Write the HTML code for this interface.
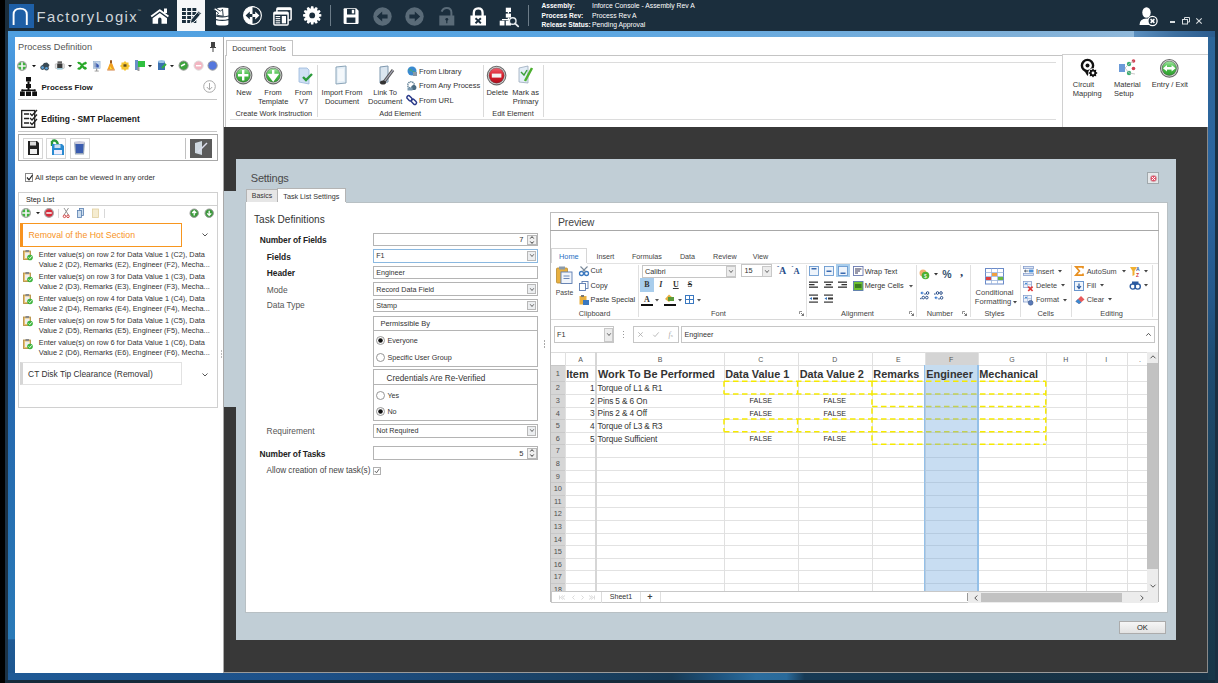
<!DOCTYPE html>
<html><head><meta charset="utf-8"><title>FactoryLogix</title>
<style>
html,body{margin:0;padding:0;}
body{width:1218px;height:683px;overflow:hidden;position:relative;background:#1b2e3d;font-family:"Liberation Sans", sans-serif;}
.a{position:absolute;box-sizing:border-box;}
.t{position:absolute;white-space:nowrap;line-height:1;font-family:"Liberation Sans", sans-serif;}
svg.a{overflow:visible;}
</style></head><body>
<div class="a" style="left:0px;top:0px;width:5px;height:683px;background:#000"></div>
<div class="a" style="left:5px;top:0px;width:1213px;height:31px;background:#1b2e3d"></div>
<div class="a" style="left:8px;top:31px;width:1126px;height:6px;background:linear-gradient(90deg,#4f9fe0 0%,#5aa6e2 50%,#7fb0d8 90%,#8fb8da 100%)"></div>
<div class="a" style="left:1134px;top:31px;width:81px;height:6px;background:linear-gradient(90deg,#5b8fbf 0%,#3d6f9f 50%,#2b5c8e 100%)"></div>
<div class="a" style="left:5px;top:31px;width:3px;height:652px;background:#1c3347"></div>
<div class="a" style="left:8px;top:37px;width:7px;height:636px;background:linear-gradient(180deg,#4c9de2 0%,#3a84cc 15%,#2d6cb5 30%,#2563ad 45%,#2670b2 75%,#2a7ab8 94.6%,#1f5a94 94.8%,#1d5690 100%)"></div>
<div class="a" style="left:8px;top:673px;width:1207px;height:7px;background:linear-gradient(90deg,#1f5a96 0%,#1d5088 25%,#1a4266 45%,#173a55 55%,#1f5580 59%,#2b6d9e 62%,#2a6a9a 64.5%,#173a55 66%,#173447 80%,#183246 100%)"></div>
<div class="a" style="left:5px;top:680px;width:1213px;height:3px;background:#152a3a"></div>
<div class="a" style="left:1208px;top:37px;width:7px;height:643px;background:linear-gradient(180deg,#2d6699 0%,#2a64a0 25%,#24588a 40%,#1e4c72 50%,#1c4460 65%,#1a3c52 80%,#193648 100%)"></div>
<div class="a" style="left:1215px;top:31px;width:3px;height:652px;background:#1a3043"></div>
<div class="a" style="left:9px;top:4px;width:25px;height:24px;background:#1e5fa6"></div>
<svg class="a" style="left:9px;top:4px;" width="25" height="24" viewBox="0 0 25 24"><path d="M4.6 21 V10.5 C4.6 6.2 7.2 4.6 11.2 4.6 C15.2 4.6 17.8 6.2 17.8 10.5 V21" fill="none" stroke="#fff" stroke-width="1.9"/></svg>
<div class="t" style="left:36.50px;top:9.67px;font-size:14.8px;color:#cfd5da;font-weight:400;letter-spacing:1.4px;">FactoryLogix</div>
<div class="t" style="left:137.00px;top:8.61px;font-size:4px;color:#9aa;font-weight:400;">&#8482;</div>
<svg class="a" style="left:150px;top:8px;" width="20" height="17" viewBox="0 0 20 17"><path d="M1.2 8.6 L9.8 2.2 L18.4 8.6" fill="none" stroke="#fff" stroke-width="1.9" stroke-linejoin="round"/><rect x="14" y="0.5" width="3" height="4.5" fill="#fff"/><path d="M2.6 10.2 L9.8 4.9 L17 10.2 V15.7 H11.5 V11.6 Q11.5 9.6 9.8 9.6 Q8.1 9.6 8.1 11.6 V15.7 H2.6Z" fill="#fff"/></svg>
<div class="a" style="left:177px;top:0px;width:28px;height:31px;background:#f6f7f9"></div>
<svg class="a" style="left:181.5px;top:8px;" width="19" height="16" viewBox="0 0 19 16"><g fill="#1b2e3d"><rect x="0.0" y="0.0" width="3.9" height="3.0"/><rect x="5.2" y="0.0" width="3.9" height="3.0"/><rect x="10.4" y="0.0" width="3.9" height="3.0"/><rect x="0.0" y="4.0" width="3.9" height="3.0"/><rect x="5.2" y="4.0" width="3.9" height="3.0"/><rect x="10.4" y="4.0" width="3.9" height="3.0"/><rect x="0.0" y="8.0" width="3.9" height="3.0"/><rect x="5.2" y="8.0" width="3.9" height="3.0"/><rect x="10.4" y="8.0" width="3.9" height="3.0"/><rect x="0.0" y="12.0" width="3.9" height="3.0"/><rect x="5.2" y="12.0" width="3.9" height="3.0"/><rect x="10.4" y="12.0" width="3.9" height="3.0"/></g><path d="M8.2 15.6 L9.2 11.4 L16.4 3 L19.4 5.6 L12.2 14 Z" fill="#1b2e3d" stroke="#f6f7f9" stroke-width="1"/><path d="M15.4 4.2 L18.4 6.8" stroke="#f6f7f9" stroke-width=".7"/></svg>
<svg class="a" style="left:212.5px;top:6.5px;" width="16" height="19" viewBox="0 0 16 19"><path d="M3 13.2 Q9.2 14.8 15.4 13.2 V17 Q15.4 18.6 9.2 18.6 Q3 18.6 3 17Z" fill="#fff"/><path d="M3 9.6 Q9.2 11.4 15.4 9.6 V11.9 Q9.2 13.6 3 11.9Z" fill="#fff"/><path d="M4.5 1 Q9.2 -0.2 15.4 1 V8.4 Q9.2 10.2 3 8.4 V5Z" fill="#fff"/><path d="M0.6 2.2 L2 0.8 L7.5 4.2 L9.5 2.2 L10.2 9.2 L3.6 8.2 L5.6 6.2Z" fill="#fff" stroke="#1b2e3d" stroke-width=".9"/></svg>
<svg class="a" style="left:242.5px;top:6.3px;" width="19" height="19" viewBox="0 0 19 19"><circle cx="9.5" cy="9.5" r="8.9" fill="#1b2e3d" stroke="#fff" stroke-width="1.1"/><path d="M9.5 0.6 A8.9 8.9 0 0 0 9.5 18.4Z" fill="#fff"/><path d="M2.6 9.5 L6.8 5.6 V8.1 H9.5 V10.9 H6.8 V13.4Z" fill="#1b2e3d"/><path d="M16.4 9.5 L12.2 5.6 V8.1 H9.5 V10.9 H12.2 V13.4Z" fill="#fff"/></svg>
<svg class="a" style="left:273px;top:6.5px;" width="19" height="19" viewBox="0 0 19 19"><rect x="3.9" y="0.9" width="14.2" height="12.2" rx="1" fill="none" stroke="#fff" stroke-width="1.5"/><rect x="3.9" y="0.9" width="14.2" height="2.2" fill="#fff"/><rect x="0.9" y="5.2" width="14.2" height="12.9" rx="1" fill="#1b2e3d" stroke="#fff" stroke-width="1.5"/><rect x="0.9" y="5.2" width="14.2" height="2.4" fill="#fff"/><g fill="#fff"><rect x="2.6" y="9" width="4.6" height="1.1"/><rect x="2.6" y="11.1" width="4.6" height="1.1"/><rect x="2.6" y="13.2" width="4.6" height="1.1"/><rect x="2.6" y="15.3" width="4.6" height="1.1"/><rect x="8.8" y="9" width="4.2" height="7.4"/></g></svg>
<svg class="a" style="left:303.4px;top:6.4px;" width="19" height="19" viewBox="0 0 19 19"><polygon points="15.58,7.70 18.33,8.30 18.33,10.50 15.58,11.10 15.57,11.12 17.66,13.01 16.56,14.92 13.88,14.06 13.86,14.08 14.72,16.76 12.81,17.86 10.92,15.77 10.90,15.78 10.30,18.53 8.10,18.53 7.50,15.78 7.48,15.77 5.59,17.86 3.68,16.76 4.54,14.08 4.52,14.06 1.84,14.92 0.74,13.01 2.83,11.12 2.82,11.10 0.07,10.50 0.07,8.30 2.82,7.70 2.83,7.68 0.74,5.79 1.84,3.88 4.52,4.74 4.54,4.72 3.68,2.04 5.59,0.94 7.48,3.03 7.50,3.02 8.10,0.27 10.30,0.27 10.90,3.02 10.92,3.03 12.81,0.94 14.72,2.04 13.86,4.72 13.88,4.74 16.56,3.88 17.66,5.79 15.57,7.68" fill="#fff"/><circle cx="9.2" cy="9.4" r="6.9" fill="#fff"/><circle cx="9.2" cy="9.4" r="2.9" fill="#1b2e3d"/></svg>
<div class="a" style="left:330px;top:5px;width:1px;height:21px;background:#6c7c88"></div>
<svg class="a" style="left:343.3px;top:7.8px;" width="16" height="16.2" viewBox="0 0 16 16.2"><path d="M0.6 1.2 Q0.6 0.3 1.5 0.3 H13.2 L15.6 2.7 V15.1 Q15.6 15.9 14.8 15.9 H1.5 Q0.6 15.9 0.6 15.1Z" fill="#fff"/><rect x="4" y="1" width="8.3" height="5.5" fill="#1b2e3d"/><rect x="8.8" y="1.8" width="2.4" height="3.6" fill="#fff"/><rect x="3.6" y="9.5" width="8.8" height="5.4" fill="#1b2e3d"/></svg>
<svg class="a" style="left:373.3px;top:6.6px;" width="19" height="19" viewBox="0 0 19 19"><circle cx="9.5" cy="9.5" r="9.2" fill="#5a6b78"/><path d="M3.8 9.5 L9.2 4.6 V7.6 H14.6 V11.4 H9.2 V14.4Z" fill="#1b2e3d"/></svg>
<svg class="a" style="left:405px;top:6.6px;" width="19" height="19" viewBox="0 0 19 19"><circle cx="9.5" cy="9.5" r="9.2" fill="#5a6b78"/><path d="M15.2 9.5 L9.8 4.6 V7.6 H4.4 V11.4 H9.8 V14.4Z" fill="#1b2e3d"/></svg>
<svg class="a" style="left:438.5px;top:6.5px;" width="16" height="19" viewBox="0 0 16 19"><path d="M2.6 4.6 Q4 0.9 7.8 0.9 Q12.4 0.9 12.4 5.5 V9" fill="none" stroke="#5a6b78" stroke-width="2"/><rect x="0.3" y="8.5" width="15" height="10" fill="#5a6b78"/><circle cx="7.8" cy="12.3" r="1.4" fill="#1b2e3d"/><rect x="7.2" y="12.5" width="1.2" height="3.8" fill="#1b2e3d"/></svg>
<svg class="a" style="left:469.5px;top:6.5px;" width="16.5" height="19" viewBox="0 0 16.5 19"><path d="M3.8 9 V6 Q3.8 1.4 8.2 1.4 Q12.6 1.4 12.6 6 V9" fill="none" stroke="#fff" stroke-width="2.3"/><rect x="0.4" y="8.5" width="15.6" height="10" fill="#fff"/><path d="M5.5 11.2 L10.9 16.2 M10.9 11.2 L5.5 16.2" stroke="#1b2e3d" stroke-width="1.9"/></svg>
<svg class="a" style="left:499px;top:6.5px;" width="20" height="20" viewBox="0 0 20 20"><g fill="#fff"><rect x="6.8" y="0.7" width="5.2" height="4.3"/><rect x="8.8" y="5" width="1.2" height="1.6"/><rect x="6.8" y="6.6" width="5.2" height="4"/><rect x="0.7" y="13.7" width="4.8" height="4.8"/><rect x="6.8" y="13.7" width="5.2" height="4.8"/><rect x="3" y="12" width="6" height="1.2"/><rect x="8.8" y="10.6" width="1.2" height="3"/></g><circle cx="13.7" cy="14" r="3.3" fill="#1b2e3d" stroke="#e8ecef" stroke-width="1.4"/><path d="M16 16.4 L19.2 19.4" stroke="#e8ecef" stroke-width="1.8" stroke-linecap="round"/></svg>
<div class="a" style="left:528px;top:5px;width:1px;height:21px;background:#6c7c88"></div>
<div class="t" style="left:541.50px;top:2.81px;font-size:6.6px;color:#ffffff;font-weight:700;">Assembly:</div>
<div class="t" style="left:592.00px;top:2.64px;font-size:6.8px;color:#ffffff;font-weight:400;">Inforce Console - Assembly Rev A</div>
<div class="t" style="left:541.50px;top:12.71px;font-size:6.6px;color:#ffffff;font-weight:700;">Process Rev:</div>
<div class="t" style="left:592.00px;top:12.54px;font-size:6.8px;color:#ffffff;font-weight:400;">Process Rev A</div>
<div class="t" style="left:541.50px;top:21.71px;font-size:6.6px;color:#ffffff;font-weight:700;">Release Status:</div>
<div class="t" style="left:592.00px;top:21.54px;font-size:6.8px;color:#ffffff;font-weight:400;">Pending Approval</div>
<svg class="a" style="left:1139px;top:7px;" width="19" height="19" viewBox="0 0 19 19"><ellipse cx="7.5" cy="5.5" rx="4.2" ry="5.3" fill="#fff"/><path d="M0.5 18 Q0.5 11.5 7.5 11.5 Q11 11.5 12 13 L10 18Z" fill="#fff"/><circle cx="13.5" cy="14" r="4.6" fill="#1b2e3d" stroke="#fff" stroke-width="1.3"/><path d="M11.6 12.1 L15.4 15.9 M15.4 12.1 L11.6 15.9" stroke="#fff" stroke-width="1.6"/></svg>
<div class="a" style="left:1170px;top:21px;width:5px;height:2px;background:#d8dde0"></div>
<svg class="a" style="left:1182px;top:17px;" width="8" height="8" viewBox="0 0 8 8"><rect x="0.5" y="2.5" width="5" height="4.5" fill="none" stroke="#d8dde0" stroke-width="1"/><path d="M2.5 2.5 V0.5 H7.5 V5 H5.5" fill="none" stroke="#d8dde0" stroke-width="1"/></svg>
<svg class="a" style="left:1196px;top:18px;" width="6" height="6" viewBox="0 0 6 6"><path d="M0.3 0.3 L5.7 5.7 M5.7 0.3 L0.3 5.7" stroke="#d8dde0" stroke-width="1.1"/></svg>
<div class="a" style="left:15px;top:37px;width:208px;height:636px;background:#fff"></div>
<div class="a" style="left:223px;top:37px;width:1px;height:636px;background:#a9a9a9"></div>
<div class="t" style="left:18.00px;top:43.21px;font-size:9.2px;color:#555;font-weight:400;">Process Definition</div>
<svg class="a" style="left:210px;top:42px;" width="6" height="10" viewBox="0 0 6 10"><rect x="1" y="0" width="4" height="5" fill="#444"/><rect x="0" y="5" width="6" height="1" fill="#444"/><rect x="2.5" y="6" width="1" height="4" fill="#444"/></svg>
<svg class="a" style="left:17.3px;top:60.7px;" width="10" height="10" viewBox="0 0 10 10"><circle cx="5" cy="5" r="4.4" fill="#3cb43c" stroke="#a8a8a8" stroke-width="1.2"/><path d="M5 1.2 V8.8 M1.2 5 H8.8" stroke="#f4f4f4" stroke-width="1.7"/></svg>
<svg class="a" style="left:31.5px;top:65px;" width="4" height="2.2" viewBox="0 0 4 2.2"><path d="M0 0 H4 L2 2.2Z" fill="#111"/></svg>
<svg class="a" style="left:40px;top:61.5px;" width="10" height="8.5" viewBox="0 0 10 8.5"><path d="M1 5 L4 1 L7 0.5 L9.5 3 L8 6 Z" fill="#3a4a55"/><circle cx="2.6" cy="5.6" r="2.3" fill="#3a4a55"/><circle cx="2.6" cy="5.6" r="1.3" fill="#5aa0d8"/><circle cx="6.5" cy="6.3" r="2.3" fill="#3a4a55"/><circle cx="6.5" cy="6.3" r="1.3" fill="#5aa0d8"/></svg>
<svg class="a" style="left:55px;top:61px;" width="9.5" height="9" viewBox="0 0 9.5 9"><rect x="2.5" y="0.3" width="4.5" height="3" fill="#666"/><rect x="0.3" y="2.8" width="9" height="4.6" rx=".6" fill="#e8e8e8" stroke="#999" stroke-width=".5"/><rect x="2.2" y="2.8" width="5.2" height="4.4" fill="#3a3a3a"/><rect x="2" y="7" width="5.6" height="1.6" fill="#9cc8d8"/></svg>
<svg class="a" style="left:68px;top:65px;" width="4" height="2.2" viewBox="0 0 4 2.2"><path d="M0 0 H4 L2 2.2Z" fill="#222"/></svg>
<svg class="a" style="left:77px;top:61px;" width="10" height="9.5" viewBox="0 0 10 9.5"><path d="M0.8 2.2 C2.5 1 3.5 2.5 5 4.6 C6.5 6.8 7.5 8 9.4 7 M0.8 7.2 C2.5 8.5 3.5 7 5 4.6 C6.5 2.5 7.5 1.4 9.4 2.4" fill="none" stroke="#28a828" stroke-width="2.3"/><path d="M8 0.3 L9.8 2.4 L7.6 3.8Z M8 5.6 L9.8 7 L7.6 9.2Z" fill="#28a828"/></svg>
<svg class="a" style="left:93px;top:60.5px;" width="7.5" height="10.5" viewBox="0 0 7.5 10.5"><rect x="0.3" y="0.3" width="6.8" height="7.2" fill="#c4d8ee" stroke="#8aa8c8" stroke-width=".5"/><rect x="1.5" y="1.5" width="1.2" height="5" fill="#7a8ab0"/><path d="M3.2 6.5 L3.2 2 L5.8 4 L5.8 6.5Z" fill="#3a5ab0"/><rect x="3.2" y="7.5" width="1" height="2.6" fill="#888"/><rect x="1.6" y="9.6" width="4.2" height=".9" fill="#999"/></svg>
<svg class="a" style="left:107px;top:60.2px;" width="8" height="10.6" viewBox="0 0 8 10.6"><rect x="3" y="0" width="2" height="4" rx="1" fill="#9a5a20"/><path d="M2.8 3.5 H5.2 C6 5 6.5 7.5 7.8 9.6 H0.2 C1.5 7.5 2 5 2.8 3.5Z" fill="#f2a020"/><path d="M3 6 C3.6 7 4.5 8.5 5.8 9.6 H3.5 C3 8.5 2.6 7 3 6Z" fill="#ffe040"/><path d="M0.2 9.6 H7.8 V10.4 H0.2Z" fill="#c86010"/></svg>
<svg class="a" style="left:120px;top:60.7px;" width="10" height="10" viewBox="0 0 10 10"><polygon points="10.00,5.00 8.51,6.45 8.54,8.54 6.45,8.51 5.00,10.00 3.55,8.51 1.46,8.54 1.49,6.45 0.00,5.00 1.49,3.55 1.46,1.46 3.55,1.49 5.00,0.00 6.45,1.49 8.54,1.46 8.51,3.55" fill="#f4c430"/><rect x="3.5" y="3.3" width="3" height="2.4" fill="#5a4a20"/></svg>
<svg class="a" style="left:134.5px;top:60px;" width="10" height="11" viewBox="0 0 10 11"><rect x="0" y="0" width="3" height="10" fill="#6a8fc8"/><path d="M3 1 H10 V7 H3Z" fill="#30c040"/><rect x="2.5" y="7" width="2" height="4" fill="#999"/></svg>
<svg class="a" style="left:148.4px;top:65px;" width="4" height="2.2" viewBox="0 0 4 2.2"><path d="M0 0 H4 L2 2.2Z" fill="#222"/></svg>
<svg class="a" style="left:158px;top:60px;" width="8.5" height="11" viewBox="0 0 8.5 11"><rect x="0" y="1" width="7" height="9" fill="#3a70b0"/><ellipse cx="3.5" cy="1.5" rx="3.5" ry="1.5" fill="#9cc4e8"/><path d="M4 8 L8 4" stroke="#30b040" stroke-width="2"/></svg>
<svg class="a" style="left:170.3px;top:65px;" width="4" height="2.2" viewBox="0 0 4 2.2"><path d="M0 0 H4 L2 2.2Z" fill="#222"/></svg>
<svg class="a" style="left:178.20000000000002px;top:60.1px;" width="11.2" height="11.2" viewBox="0 0 11.2 11.2"><circle cx="5.6" cy="5.6" r="4.6" fill="#3da23d" stroke="#9a9a9a" stroke-width="1"/><path d="M3 6 L7 4" stroke="#fff" stroke-width="1.5"/></svg>
<svg class="a" style="left:192.5px;top:60.1px;" width="11.2" height="11.2" viewBox="0 0 11.2 11.2"><circle cx="5.6" cy="5.6" r="4.6" fill="#f2b6c2" stroke="#dcdcdc" stroke-width="1"/><rect x="3" y="5" width="5.2" height="1.4" fill="#fff"/></svg>
<svg class="a" style="left:207.4px;top:60.1px;" width="11.2" height="11.2" viewBox="0 0 11.2 11.2"><circle cx="5.6" cy="5.6" r="4.6" fill="#5577dd" stroke="#9a9a9a" stroke-width="1"/></svg>
<svg class="a" style="left:20px;top:77px;" width="17" height="19" viewBox="0 0 17 19"><g fill="#111"><rect x="6" y="0" width="5" height="4.5"/><rect x="7.5" y="4.5" width="2" height="2.5"/><rect x="6" y="7" width="5" height="4"/><rect x="7.5" y="11" width="2" height="2"/><rect x="1.5" y="12.5" width="14" height="1.6"/><rect x="1.5" y="12.5" width="1.6" height="2"/><rect x="13.9" y="12.5" width="1.6" height="2"/><rect x="0" y="14.5" width="4.8" height="4.5"/><rect x="6" y="14.5" width="5" height="4.5"/><rect x="12.2" y="14.5" width="4.8" height="4.5"/></g></svg>
<div class="t" style="left:41.50px;top:83.57px;font-size:7.95px;color:#1a1a1a;font-weight:700;">Process Flow</div>
<svg class="a" style="left:203px;top:80px;" width="13" height="13" viewBox="0 0 13 13"><circle cx="6.5" cy="6.5" r="5.8" fill="none" stroke="#aaa" stroke-width="1"/><path d="M6.5 3 V9.5 M3.8 7 L6.5 9.8 L9.2 7" fill="none" stroke="#aaa" stroke-width="1"/></svg>
<div class="a" style="left:18px;top:99px;width:199px;height:1px;background:#c8c8c8"></div>
<svg class="a" style="left:21px;top:109px;" width="17" height="19" viewBox="0 0 17 19"><rect x="0.7" y="1.5" width="13" height="16.8" fill="#fff" stroke="#222" stroke-width="1.3"/><g stroke="#222" stroke-width="1.3" fill="none"><path d="M3 5 H8 M3 9.5 H8 M3 14 H8"/><path d="M9 4.5 L11 6.5 L16 1 M9 9 L11 11 L16 5.5 M9 13.5 L11 15.5 L16 10"/></g></svg>
<div class="t" style="left:41.30px;top:114.93px;font-size:8.45px;color:#1a1a1a;font-weight:700;">Editing - SMT Placement</div>
<div class="a" style="left:18px;top:131px;width:199px;height:1px;background:#c8c8c8"></div>
<div class="a" style="left:18px;top:134px;width:200px;height:27px;border:1px solid #a8a8a8;background:#fff"></div>
<div class="a" style="left:23px;top:138px;width:20px;height:21px;border:1px solid #d6d6d6;background:#fff"></div>
<div class="a" style="left:46px;top:138px;width:20px;height:21px;border:1px solid #d6d6d6;background:#fff"></div>
<div class="a" style="left:69.5px;top:138px;width:20px;height:21px;border:1px solid #d6d6d6;background:#fff"></div>
<svg class="a" style="left:28px;top:141px;" width="11" height="14" viewBox="0 0 11 14"><path d="M0 0 H9 L11 2 V14 H0Z" fill="#222"/><rect x="2" y="0.5" width="6" height="4" fill="#ddd"/><rect x="2" y="8" width="7" height="5" fill="#eee"/></svg>
<svg class="a" style="left:49px;top:140px;" width="15" height="15" viewBox="0 0 15 15"><path d="M3 1 V6 M3 1 Q8 -1 9 5" stroke="#2a9a3a" stroke-width="2.4" fill="none"/><path d="M3 4 H13 L15 6 V15 H3Z" fill="#2a8ad0"/><rect x="5.5" y="4.5" width="6" height="3.5" fill="#cde"/><rect x="5" y="10" width="8" height="4.5" fill="#eef"/></svg>
<svg class="a" style="left:74px;top:141px;" width="11" height="14" viewBox="0 0 11 14"><path d="M0 1 H11 L10 13.5 H1Z" fill="#9aa8b8"/><path d="M1.5 3 H9.5 L9 12 H2Z" fill="#3a5cb0"/><ellipse cx="5.5" cy="1.5" rx="5.5" ry="1.5" fill="#ccd"/></svg>
<div class="a" style="left:185px;top:138px;width:1px;height:21px;background:#c0c0c0"></div>
<div class="a" style="left:190px;top:139px;width:22px;height:19px;background:#5b5b5b"></div>
<svg class="a" style="left:194px;top:141px;" width="15" height="15" viewBox="0 0 15 15"><path d="M1 2 L8 0 V14 L1 12Z" fill="#cfd8e0"/><path d="M4 11 L13 2" stroke="#dde" stroke-width="1.4"/></svg>
<div class="a" style="left:24.5px;top:173px;width:8.5px;height:8.5px;border:1px solid #888;background:#fff"></div>
<svg class="a" style="left:25.5px;top:174px;" width="7" height="7" viewBox="0 0 7 7"><path d="M1 3.5 L3 5.8 L6.5 1" stroke="#222" stroke-width="1.2" fill="none"/></svg>
<div class="t" style="left:35.00px;top:174.05px;font-size:7.5px;color:#333;font-weight:400;">All steps can be viewed in any order</div>
<div class="a" style="left:18px;top:192px;width:200px;height:216px;border:1px solid #d0d0d0;background:#fff"></div>
<div class="a" style="left:19px;top:205px;width:198px;height:1px;background:#d0d0d0"></div>
<div class="t" style="left:25.90px;top:195.82px;font-size:7.3px;color:#222;font-weight:400;">Step List</div>
<svg class="a" style="left:21.4px;top:208px;" width="10" height="10" viewBox="0 0 10 10"><circle cx="5" cy="5" r="4.4" fill="#3cb43c" stroke="#a8a8a8" stroke-width="1.2"/><path d="M5 1.2 V8.8 M1.2 5 H8.8" stroke="#f4f4f4" stroke-width="1.7"/></svg>
<svg class="a" style="left:35.5px;top:212.3px;" width="4" height="2.2" viewBox="0 0 4 2.2"><path d="M0 0 H4 L2 2.2Z" fill="#222"/></svg>
<svg class="a" style="left:43.5px;top:208px;" width="10" height="10" viewBox="0 0 10 10"><circle cx="5" cy="5" r="4.4" fill="#d82a3a" stroke="#a8a8a8" stroke-width="1.2"/><rect x="2.3" y="4.2" width="5.4" height="1.6" fill="#f4f4f4"/></svg>
<div class="a" style="left:57.5px;top:209px;width:1px;height:9px;background:#d8d8d8"></div>
<svg class="a" style="left:62.5px;top:208px;" width="6.5" height="10" viewBox="0 0 6.5 10"><path d="M1 0 L5.5 7 M5.5 0 L1 7" stroke="#888" stroke-width=".9"/><circle cx="1.5" cy="8.3" r="1.3" fill="none" stroke="#c33" stroke-width=".9"/><circle cx="5" cy="8.3" r="1.3" fill="none" stroke="#c33" stroke-width=".9"/></svg>
<svg class="a" style="left:77px;top:208px;" width="7" height="10" viewBox="0 0 7 10"><rect x="2.5" y="0.5" width="4" height="7" fill="#cde" stroke="#5a7fb0" stroke-width=".8"/><rect x="0.5" y="2.5" width="4" height="7" fill="#cde" stroke="#5a7fb0" stroke-width=".8"/></svg>
<svg class="a" style="left:91.5px;top:208px;" width="7" height="10" viewBox="0 0 7 10"><rect x="0.5" y="1" width="6" height="8.5" fill="#f5ecd0" stroke="#e0d0a0" stroke-width=".8"/></svg>
<div class="a" style="left:103.5px;top:209px;width:1px;height:9px;background:#d8d8d8"></div>
<svg class="a" style="left:189.20000000000002px;top:207.8px;" width="10.4" height="10.4" viewBox="0 0 10.4 10.4"><circle cx="5.2" cy="5.2" r="4.2" fill="#3a9a3a" stroke="#9a9a9a" stroke-width="1"/><path d="M5.2 7.6 V3 M3.2 5 L5.2 3 L7.2 5" stroke="#fff" stroke-width="1.3" fill="none"/></svg>
<svg class="a" style="left:204.0px;top:207.8px;" width="10.4" height="10.4" viewBox="0 0 10.4 10.4"><circle cx="5.2" cy="5.2" r="4.2" fill="#3a9a3a" stroke="#9a9a9a" stroke-width="1"/><path d="M5.2 2.8 V7.4 M3.2 5.4 L5.2 7.4 L7.2 5.4" stroke="#fff" stroke-width="1.3" fill="none"/></svg>
<div class="a" style="left:20px;top:223px;width:162px;height:24px;border:1px solid #f7961f;border-left:3px solid #f7931e;background:#fff"></div>
<div class="t" style="left:28.50px;top:231.08px;font-size:8.76px;color:#f7931e;font-weight:400;">Removal of the Hot Section</div>
<svg class="a" style="left:202px;top:233px;" width="6" height="4" viewBox="0 0 6 4"><path d="M0.5 0.5 L3 3 L5.5 0.5" fill="none" stroke="#555" stroke-width="1"/></svg>
<svg class="a" style="left:23px;top:250.3px;" width="10" height="10" viewBox="0 0 10 10"><rect x="0.5" y="1" width="7" height="8.5" fill="#e8c070" stroke="#b08838" stroke-width=".8"/><rect x="2" y="2.5" width="4.5" height="5.5" fill="#eee"/><rect x="2.5" y="0" width="3.5" height="2" fill="#888"/><circle cx="7" cy="7.5" r="2.8" fill="#3cb43c"/><path d="M5.6 7.4 L6.8 8.6 L8.6 6.3" stroke="#fff" stroke-width=".9" fill="none"/></svg>
<div class="t" style="left:38.80px;top:251.27px;font-size:7.33px;color:#333;font-weight:400;">Enter value(s) on row 2 for Data Value 1 (C2), Data</div>
<div class="t" style="left:38.80px;top:261.17px;font-size:7.33px;color:#333;font-weight:400;">Value 2 (D2), Remarks (E2), Engineer (F2), Mecha...</div>
<svg class="a" style="left:23px;top:272.35px;" width="10" height="10" viewBox="0 0 10 10"><rect x="0.5" y="1" width="7" height="8.5" fill="#e8c070" stroke="#b08838" stroke-width=".8"/><rect x="2" y="2.5" width="4.5" height="5.5" fill="#eee"/><rect x="2.5" y="0" width="3.5" height="2" fill="#888"/><circle cx="7" cy="7.5" r="2.8" fill="#3cb43c"/><path d="M5.6 7.4 L6.8 8.6 L8.6 6.3" stroke="#fff" stroke-width=".9" fill="none"/></svg>
<div class="t" style="left:38.80px;top:273.32px;font-size:7.33px;color:#333;font-weight:400;">Enter value(s) on row 3 for Data Value 1 (C3), Data</div>
<div class="t" style="left:38.80px;top:283.22px;font-size:7.33px;color:#333;font-weight:400;">Value 2 (D3), Remarks (E3), Engineer (F3), Mecha...</div>
<svg class="a" style="left:23px;top:294.40000000000003px;" width="10" height="10" viewBox="0 0 10 10"><rect x="0.5" y="1" width="7" height="8.5" fill="#e8c070" stroke="#b08838" stroke-width=".8"/><rect x="2" y="2.5" width="4.5" height="5.5" fill="#eee"/><rect x="2.5" y="0" width="3.5" height="2" fill="#888"/><circle cx="7" cy="7.5" r="2.8" fill="#3cb43c"/><path d="M5.6 7.4 L6.8 8.6 L8.6 6.3" stroke="#fff" stroke-width=".9" fill="none"/></svg>
<div class="t" style="left:38.80px;top:295.37px;font-size:7.33px;color:#333;font-weight:400;">Enter value(s) on row 4 for Data Value 1 (C4), Data</div>
<div class="t" style="left:38.80px;top:305.27px;font-size:7.33px;color:#333;font-weight:400;">Value 2 (D4), Remarks (E4), Engineer (F4), Mecha...</div>
<svg class="a" style="left:23px;top:316.45000000000005px;" width="10" height="10" viewBox="0 0 10 10"><rect x="0.5" y="1" width="7" height="8.5" fill="#e8c070" stroke="#b08838" stroke-width=".8"/><rect x="2" y="2.5" width="4.5" height="5.5" fill="#eee"/><rect x="2.5" y="0" width="3.5" height="2" fill="#888"/><circle cx="7" cy="7.5" r="2.8" fill="#3cb43c"/><path d="M5.6 7.4 L6.8 8.6 L8.6 6.3" stroke="#fff" stroke-width=".9" fill="none"/></svg>
<div class="t" style="left:38.80px;top:317.42px;font-size:7.33px;color:#333;font-weight:400;">Enter value(s) on row 5 for Data Value 1 (C5), Data</div>
<div class="t" style="left:38.80px;top:327.32px;font-size:7.33px;color:#333;font-weight:400;">Value 2 (D5), Remarks (E5), Engineer (F5), Mecha...</div>
<svg class="a" style="left:23px;top:338.5px;" width="10" height="10" viewBox="0 0 10 10"><rect x="0.5" y="1" width="7" height="8.5" fill="#e8c070" stroke="#b08838" stroke-width=".8"/><rect x="2" y="2.5" width="4.5" height="5.5" fill="#eee"/><rect x="2.5" y="0" width="3.5" height="2" fill="#888"/><circle cx="7" cy="7.5" r="2.8" fill="#3cb43c"/><path d="M5.6 7.4 L6.8 8.6 L8.6 6.3" stroke="#fff" stroke-width=".9" fill="none"/></svg>
<div class="t" style="left:38.80px;top:339.47px;font-size:7.33px;color:#333;font-weight:400;">Enter value(s) on row 6 for Data Value 1 (C6), Data</div>
<div class="t" style="left:38.80px;top:349.37px;font-size:7.33px;color:#333;font-weight:400;">Value 2 (D6), Remarks (E6), Engineer (F6), Mecha...</div>
<div class="a" style="left:20px;top:362px;width:162px;height:22.5px;border:1px solid #e2e2e2;border-left:3px solid #d6d6d6;background:#fff"></div>
<div class="t" style="left:28.10px;top:370.45px;font-size:8.4px;color:#333;font-weight:400;">CT Disk Tip Clearance (Removal)</div>
<svg class="a" style="left:202px;top:372.5px;" width="6" height="4" viewBox="0 0 6 4"><path d="M0.5 0.5 L3 3 L5.5 0.5" fill="none" stroke="#555" stroke-width="1"/></svg>
<div class="a" style="left:221px;top:350px;width:1px;height:1.5px;background:#bbb"></div>
<div class="a" style="left:221px;top:353px;width:1px;height:1.5px;background:#bbb"></div>
<div class="a" style="left:221px;top:356px;width:1px;height:1.5px;background:#bbb"></div>
<div class="a" style="left:224px;top:37px;width:984px;height:90px;background:#fff"></div>
<div class="a" style="left:226px;top:40px;width:67px;height:16px;border:1px solid #c4c4c4;border-bottom:none;background:#fff"></div>
<div class="t" style="left:232.20px;top:44.65px;font-size:7.5px;color:#333;font-weight:400;">Document Tools</div>
<div class="a" style="left:292px;top:55px;width:771px;height:1px;background:#c4c4c4"></div>
<div class="a" style="left:225px;top:55px;width:1px;height:72px;background:#c8c8c8"></div>
<div class="a" style="left:230px;top:62px;width:826px;height:1px;background:#dcdcdc"></div>
<div class="a" style="left:230px;top:119px;width:826px;height:1px;background:#dcdcdc"></div>
<div class="a" style="left:1062px;top:55px;width:1px;height:72px;background:#d0d0d0"></div>
<div class="a" style="left:1062px;top:54px;width:146px;height:1px;background:#d0d0d0"></div>
<svg class="a" style="left:233.3px;top:65.2px;" width="20.4" height="20.4" viewBox="0 0 20.4 20.4"><defs><linearGradient id="g243" x1="0" y1="0" x2="0" y2="1"><stop offset="0" stop-color="#a6e6a6"/><stop offset=".45" stop-color="#4cc04c"/><stop offset="1" stop-color="#2f9e2f"/></linearGradient></defs><circle cx="10.2" cy="10.2" r="8.7" fill="#e8e8e8" stroke="#6a6a6a" stroke-width="1.1"/><circle cx="10.2" cy="10.2" r="7.1" fill="url(#g243)" stroke="#444" stroke-width=".5"/><path d="M10.2 5 V15.4 M5 10.2 H15.4" stroke="#fff" stroke-width="2.4"/></svg>
<div class="t" style="left:-56.20px;width:600px;text-align:center;top:89.25px;font-size:7.5px;color:#333;font-weight:400;">New</div>
<svg class="a" style="left:262.90000000000003px;top:65.2px;" width="20.4" height="20.4" viewBox="0 0 20.4 20.4"><defs><linearGradient id="g273" x1="0" y1="0" x2="0" y2="1"><stop offset="0" stop-color="#a6e6a6"/><stop offset=".45" stop-color="#4cc04c"/><stop offset="1" stop-color="#2f9e2f"/></linearGradient></defs><circle cx="10.2" cy="10.2" r="8.7" fill="#e8e8e8" stroke="#6a6a6a" stroke-width="1.1"/><circle cx="10.2" cy="10.2" r="7.1" fill="url(#g273)" stroke="#444" stroke-width=".5"/><path d="M10.2 5 V11 M6.5 10 L10.2 15 L13.9 10Z" stroke="#fff" stroke-width="2.4" fill="#fff"/></svg>
<div class="t" style="left:-26.90px;width:600px;text-align:center;top:89.25px;font-size:7.5px;color:#333;font-weight:400;">From</div>
<div class="t" style="left:-26.90px;width:600px;text-align:center;top:97.85px;font-size:7.5px;color:#333;font-weight:400;">Template</div>
<svg class="a" style="left:298px;top:68px;" width="14" height="16" viewBox="0 0 14 16"><path d="M1 0 H9 L11 2 V16 L1 14Z" fill="#cfe0f4" stroke="#9ab8dc" stroke-width=".8"/><path d="M5 9 L8 12 L14 6" stroke="#2a9a3a" stroke-width="2.4" fill="none"/></svg>
<div class="t" style="left:3.50px;width:600px;text-align:center;top:89.25px;font-size:7.5px;color:#333;font-weight:400;">From</div>
<div class="t" style="left:3.50px;width:600px;text-align:center;top:97.85px;font-size:7.5px;color:#333;font-weight:400;">V7</div>
<div class="t" style="left:-26.20px;width:600px;text-align:center;top:109.82px;font-size:7.3px;color:#333;font-weight:400;">Create Work Instruction</div>
<div class="a" style="left:317px;top:65px;width:1px;height:52px;background:#dadada"></div>
<svg class="a" style="left:335px;top:66px;" width="13" height="19" viewBox="0 0 13 19"><path d="M1 1 L11 0 V17 L1 18Z" fill="#e4eef6" stroke="#8aa4b8" stroke-width="1"/><path d="M3 3 L9 2.5 V15 L3 15.5Z" fill="#f4f8fb"/></svg>
<div class="t" style="left:42.00px;width:600px;text-align:center;top:89.25px;font-size:7.5px;color:#333;font-weight:400;">Import From</div>
<div class="t" style="left:42.00px;width:600px;text-align:center;top:97.85px;font-size:7.5px;color:#333;font-weight:400;">Document</div>
<svg class="a" style="left:378px;top:66px;" width="18" height="19" viewBox="0 0 18 19"><path d="M2 1 L10 0 V16 L2 17Z" fill="#dbe6f0" stroke="#7f98ae" stroke-width="1"/><path d="M6 16 L15 4" stroke="#555" stroke-width="3"/><path d="M6 16 L15 4" stroke="#aab" stroke-width="1.2"/><ellipse cx="5" cy="16.5" rx="3" ry="2" fill="#333"/></svg>
<div class="t" style="left:85.20px;width:600px;text-align:center;top:89.25px;font-size:7.5px;color:#333;font-weight:400;">Link To</div>
<div class="t" style="left:85.20px;width:600px;text-align:center;top:97.85px;font-size:7.5px;color:#333;font-weight:400;">Document</div>
<svg class="a" style="left:407px;top:66px;" width="10" height="10" viewBox="0 0 10 10"><circle cx="5" cy="5" r="4.5" fill="#3a8ad0"/><path d="M1.5 4 Q4 2 5 5 Q6 8 8.5 6" fill="#4cb84c"/><rect x="6" y="6" width="4" height="4" fill="#8898a8"/></svg>
<div class="t" style="left:419.00px;top:67.85px;font-size:7.5px;color:#333;font-weight:400;">From Library</div>
<svg class="a" style="left:407px;top:81px;" width="10" height="10" viewBox="0 0 10 10"><circle cx="4" cy="4" r="3.2" fill="none" stroke="#5a7a90" stroke-width="1.6" stroke-dasharray="1.2 .8"/><circle cx="6.8" cy="6.5" r="2.6" fill="#4a6a80"/><rect x="0.5" y="6.5" width="5" height="3" fill="#7a9ab0"/></svg>
<div class="t" style="left:419.00px;top:82.35px;font-size:7.5px;color:#333;font-weight:400;">From Any Process</div>
<svg class="a" style="left:407px;top:95px;" width="10" height="10" viewBox="0 0 10 10"><rect x="0.8" y="0.3" width="3.4" height="6" rx="1.7" transform="rotate(-45 2.5 3.3)" fill="none" stroke="#2a3a8a" stroke-width="1.5"/><rect x="5.2" y="3.8" width="3.4" height="6" rx="1.7" transform="rotate(-45 6.9 6.8)" fill="none" stroke="#2a3a8a" stroke-width="1.5"/></svg>
<div class="t" style="left:419.00px;top:96.75px;font-size:7.5px;color:#333;font-weight:400;">From URL</div>
<div class="t" style="left:100.20px;width:600px;text-align:center;top:109.82px;font-size:7.3px;color:#333;font-weight:400;">Add Element</div>
<div class="a" style="left:483.4px;top:65px;width:1px;height:52px;background:#dadada"></div>
<svg class="a" style="left:486px;top:64.6px;" width="21.2" height="21.2" viewBox="0 0 21.2 21.2"><defs><linearGradient id="rg" x1="0" y1="0" x2="0" y2="1"><stop offset="0" stop-color="#f06070"/><stop offset=".5" stop-color="#d81e2a"/><stop offset="1" stop-color="#b01020"/></linearGradient></defs><circle cx="10.6" cy="10.6" r="9.3" fill="#e8e8e8" stroke="#6a6a6a" stroke-width="1.1"/><circle cx="10.6" cy="10.6" r="7.7" fill="url(#rg)" stroke="#444" stroke-width=".5"/><rect x="5.8" y="8.6" width="9.6" height="4" fill="#f4f4f4"/></svg>
<div class="t" style="left:197.30px;width:600px;text-align:center;top:89.25px;font-size:7.5px;color:#333;font-weight:400;">Delete</div>
<svg class="a" style="left:518px;top:66px;" width="15" height="18" viewBox="0 0 15 18"><path d="M1 2 L10 0 V17 L1 16Z" fill="#e4eef8" stroke="#9ab" stroke-width=".8"/><path d="M3 6 L6 9 L9 4" stroke="#3aa03a" stroke-width="1.4" fill="none"/><path d="M7 15 L14 2" stroke="#4caf30" stroke-width="2.5"/></svg>
<div class="t" style="left:225.60px;width:600px;text-align:center;top:89.25px;font-size:7.5px;color:#333;font-weight:400;">Mark as</div>
<div class="t" style="left:-61.50px;width:600px;text-align:right;top:97.85px;font-size:7.5px;color:#333;font-weight:400;">Primary</div>
<div class="t" style="left:213.00px;width:600px;text-align:center;top:109.82px;font-size:7.3px;color:#333;font-weight:400;">Edit Element</div>
<div class="a" style="left:542.7px;top:65px;width:1px;height:52px;background:#dadada"></div>
<svg class="a" style="left:1081px;top:59px;" width="17" height="19" viewBox="0 0 17 19"><circle cx="6.5" cy="6.5" r="5.6" fill="none" stroke="#111" stroke-width="2.4"/><circle cx="6.5" cy="6.5" r="2" fill="#111"/><path d="M2.2 10 L6.5 17 L9 12.5" fill="#111"/><circle cx="12" cy="14" r="4.8" fill="#fff"/><polygon points="16.60,14.00 14.96,15.22 15.25,17.25 13.22,16.96 12.00,18.60 10.78,16.96 8.75,17.25 9.04,15.22 7.40,14.00 9.04,12.78 8.75,10.75 10.78,11.04 12.00,9.40 13.22,11.04 15.25,10.75 14.96,12.78" fill="#111"/><circle cx="12" cy="14" r="1.4" fill="#fff"/></svg>
<div class="t" style="left:1072.80px;top:80.65px;font-size:7.5px;color:#333;font-weight:400;">Circuit</div>
<div class="t" style="left:1072.80px;top:90.25px;font-size:7.5px;color:#333;font-weight:400;">Mapping</div>
<svg class="a" style="left:1119px;top:59px;" width="18" height="19" viewBox="0 0 18 19"><rect x="0" y="5" width="6" height="8" fill="#6a9ad8"/><circle cx="10" cy="5" r="2.2" fill="#3ab070"/><circle cx="14.5" cy="2" r="1.8" fill="#d04050"/><circle cx="14.5" cy="9.5" r="1.8" fill="#d04050"/><circle cx="10" cy="14" r="2.2" fill="#3ab070"/><path d="M6 9 L10 5 M6 9 L10 14 M10 5 L14.5 2 M10 14 L16 15" stroke="#bbb" stroke-width=".8"/></svg>
<div class="t" style="left:1114.00px;top:80.65px;font-size:7.5px;color:#333;font-weight:400;">Material</div>
<div class="t" style="left:1114.00px;top:90.25px;font-size:7.5px;color:#333;font-weight:400;">Setup</div>
<svg class="a" style="left:1159.3px;top:57.60000000000001px;" width="20.6" height="20.6" viewBox="0 0 20.6 20.6"><defs><linearGradient id="g1169" x1="0" y1="0" x2="0" y2="1"><stop offset="0" stop-color="#a6e6a6"/><stop offset=".45" stop-color="#4cc04c"/><stop offset="1" stop-color="#2f9e2f"/></linearGradient></defs><circle cx="10.3" cy="10.3" r="8.8" fill="#e8e8e8" stroke="#6a6a6a" stroke-width="1.1"/><circle cx="10.3" cy="10.3" r="7.200000000000001" fill="url(#g1169)" stroke="#444" stroke-width=".5"/><path d="M4 10.3 L8 7 V13.6Z M16.6 10.3 L12.6 7 V13.6Z" fill="#fff"/><rect x="7" y="9" width="6.6" height="2.6" fill="#fff"/></svg>
<div class="t" style="left:869.80px;width:600px;text-align:center;top:80.65px;font-size:7.5px;color:#333;font-weight:400;">Entry / Exit</div>
<div class="a" style="left:224px;top:127px;width:984px;height:545px;background:#383838"></div>
<div class="a" style="left:224px;top:672px;width:984px;height:1px;background:#9a9a9a"></div>
<div class="a" style="left:1207px;top:127px;width:1px;height:546px;background:#8a8a8a"></div>
<div class="a" style="left:224px;top:191px;width:12px;height:216px;background:#c1ced6"></div>
<div class="a" style="left:236px;top:159px;width:940px;height:481px;background:#c1ced6"></div>
<div class="t" style="left:250.80px;top:172.59px;font-size:11px;color:#4a4a4a;font-weight:400;letter-spacing:-0.25px;">Settings</div>
<div class="a" style="left:1147px;top:172px;width:12px;height:12px;background:#e6e8ea;border:1px solid #a0a8ac"></div>
<svg class="a" style="left:1149.5px;top:174.5px;" width="7" height="7" viewBox="0 0 7 7"><circle cx="3.5" cy="3.5" r="3.2" fill="#e05068" stroke="#c8c8c8" stroke-width=".6"/><path d="M2 2 L5 5 M5 2 L2 5" stroke="#fff" stroke-width="1"/></svg>
<div class="a" style="left:246px;top:189px;width:32px;height:14px;background:#e6e6e6;border:1px solid #b4b4b4;border-bottom:none"></div>
<div class="t" style="left:-38.00px;width:600px;text-align:center;top:192.96px;font-size:6.9px;color:#333;font-weight:400;">Basics</div>
<div class="a" style="left:277px;top:188px;width:69px;height:15px;background:#fff;border:1px solid #b4b4b4;border-bottom:none"></div>
<div class="t" style="left:11.30px;width:600px;text-align:center;top:192.71px;font-size:7.2px;color:#333;font-weight:400;">Task List Settings</div>
<div class="a" style="left:244.6px;top:202px;width:923.4px;height:411px;background:#fff;border:1px solid #b8c0c4;border-top:none"></div>
<div class="a" style="left:346px;top:202px;width:822px;height:1px;background:#b8c0c4"></div>
<div class="t" style="left:254.00px;top:215.15px;font-size:10.1px;color:#333;font-weight:400;">Task Definitions</div>
<div class="t" style="left:259.80px;top:236.29px;font-size:8.4px;color:#222;font-weight:700;letter-spacing:-0.1px;">Number of Fields</div>
<div class="t" style="left:266.70px;top:252.79px;font-size:8.4px;color:#222;font-weight:700;">Fields</div>
<div class="t" style="left:266.70px;top:268.99px;font-size:8.4px;color:#222;font-weight:700;">Header</div>
<div class="t" style="left:266.70px;top:285.79px;font-size:8.4px;color:#555;font-weight:400;">Mode</div>
<div class="t" style="left:266.70px;top:300.89px;font-size:8.4px;color:#555;font-weight:400;">Data Type</div>
<div class="a" style="left:373px;top:233px;width:164.5px;height:13.300000000000011px;background:#fff;border:1px solid #b4b4b4"></div>
<div class="a" style="left:527px;top:234.5px;width:9.5px;height:10.300000000000011px;background:#f0f0f0;border:1px solid #b8b8b8"></div>
<svg class="a" style="left:529.5px;top:236px;" width="4" height="8" viewBox="0 0 4 8"><path d="M0.3 2.5 L2 0.6 L3.7 2.5 M0.3 5.5 L2 7.4 L3.7 5.5" fill="none" stroke="#333" stroke-width="1"/></svg>
<div class="t" style="left:-76.50px;width:600px;text-align:right;top:236.03px;font-size:7.5px;color:#333;font-weight:400;">7</div>
<div class="a" style="left:373px;top:249px;width:164.5px;height:13.800000000000011px;background:#fff;border:1px solid #8ab8e0"></div>
<div class="t" style="left:376.20px;top:252.43px;font-size:7.2px;color:#333;font-weight:400;">F1</div>
<div class="a" style="left:527px;top:251px;width:9px;height:9.800000000000011px;background:#eceef0;border:1px solid #b8b8b8"></div>
<svg class="a" style="left:529.5px;top:254.4px;" width="4" height="3" viewBox="0 0 4 3"><path d="M0.2 0.3 L2 2.5 L3.8 0.3" fill="none" stroke="#555" stroke-width=".9"/></svg>
<div class="a" style="left:373px;top:265.6px;width:164.5px;height:13.699999999999989px;background:#fff;border:1px solid #b4b4b4"></div>
<div class="t" style="left:376.20px;top:268.98px;font-size:7.2px;color:#333;font-weight:400;">Engineer</div>
<div class="a" style="left:373px;top:282.3px;width:164.5px;height:13.5px;background:#fff;border:1px solid #b4b4b4"></div>
<div class="t" style="left:376.20px;top:285.58px;font-size:7.2px;color:#333;font-weight:400;">Record Data Field</div>
<div class="a" style="left:527px;top:284.3px;width:9px;height:9.5px;background:#eceef0;border:1px solid #b8b8b8"></div>
<svg class="a" style="left:529.5px;top:287.55px;" width="4" height="3" viewBox="0 0 4 3"><path d="M0.2 0.3 L2 2.5 L3.8 0.3" fill="none" stroke="#555" stroke-width=".9"/></svg>
<div class="a" style="left:373px;top:298.5px;width:164.5px;height:13.699999999999989px;background:#fff;border:1px solid #b4b4b4"></div>
<div class="t" style="left:376.20px;top:301.88px;font-size:7.2px;color:#333;font-weight:400;">Stamp</div>
<div class="a" style="left:527px;top:300.5px;width:9px;height:9.699999999999989px;background:#eceef0;border:1px solid #b8b8b8"></div>
<svg class="a" style="left:529.5px;top:303.85px;" width="4" height="3" viewBox="0 0 4 3"><path d="M0.2 0.3 L2 2.5 L3.8 0.3" fill="none" stroke="#555" stroke-width=".9"/></svg>
<div class="a" style="left:373px;top:315.5px;width:164.5px;height:51.2px;border:1px solid #b4b4b4;background:#fff"></div>
<div class="a" style="left:373px;top:330px;width:164.5px;height:1px;background:#b4b4b4"></div>
<div class="t" style="left:380.40px;top:320.08px;font-size:7.5px;color:#333;font-weight:400;">Permissible By</div>
<svg class="a" style="left:375.5px;top:335.9px;" width="9" height="9" viewBox="0 0 9 9"><circle cx="4.5" cy="4.5" r="4" fill="#fff" stroke="#8a8a8a" stroke-width=".9"/><circle cx="4.5" cy="4.5" r="2.3" fill="#111"/></svg>
<div class="t" style="left:387.40px;top:336.93px;font-size:7.2px;color:#333;font-weight:400;">Everyone</div>
<svg class="a" style="left:375.5px;top:352.6px;" width="9" height="9" viewBox="0 0 9 9"><circle cx="4.5" cy="4.5" r="4" fill="#fff" stroke="#8a8a8a" stroke-width=".9"/></svg>
<div class="t" style="left:387.40px;top:353.63px;font-size:7.2px;color:#333;font-weight:400;">Specific User Group</div>
<div class="a" style="left:373px;top:369.3px;width:164.5px;height:51.5px;border:1px solid #b4b4b4;background:#fff"></div>
<div class="a" style="left:373px;top:384.3px;width:164.5px;height:1px;background:#b4b4b4"></div>
<div class="t" style="left:386.60px;top:374.95px;font-size:8.2px;color:#333;font-weight:400;">Credentials Are Re-Verified</div>
<svg class="a" style="left:375.7px;top:390.6px;" width="9" height="9" viewBox="0 0 9 9"><circle cx="4.5" cy="4.5" r="4" fill="#fff" stroke="#8a8a8a" stroke-width=".9"/></svg>
<div class="t" style="left:387.40px;top:391.63px;font-size:7.2px;color:#333;font-weight:400;">Yes</div>
<svg class="a" style="left:375.7px;top:406.7px;" width="9" height="9" viewBox="0 0 9 9"><circle cx="4.5" cy="4.5" r="4" fill="#fff" stroke="#8a8a8a" stroke-width=".9"/><circle cx="4.5" cy="4.5" r="2.3" fill="#111"/></svg>
<div class="t" style="left:387.40px;top:407.73px;font-size:7.2px;color:#333;font-weight:400;">No</div>
<div class="t" style="left:266.60px;top:427.45px;font-size:8.4px;color:#555;font-weight:400;">Requirement</div>
<div class="a" style="left:373px;top:424.1px;width:164.5px;height:13.599999999999966px;background:#fff;border:1px solid #b4b4b4"></div>
<div class="t" style="left:376.20px;top:427.43px;font-size:7.2px;color:#333;font-weight:400;">Not Required</div>
<div class="a" style="left:527px;top:426.1px;width:9px;height:9.599999999999966px;background:#eceef0;border:1px solid #b8b8b8"></div>
<svg class="a" style="left:529.5px;top:429.4px;" width="4" height="3" viewBox="0 0 4 3"><path d="M0.2 0.3 L2 2.5 L3.8 0.3" fill="none" stroke="#555" stroke-width=".9"/></svg>
<div class="t" style="left:259.60px;top:450.05px;font-size:8.4px;color:#222;font-weight:700;letter-spacing:-0.1px;">Number of Tasks</div>
<div class="a" style="left:373px;top:446.3px;width:164.5px;height:14.0px;background:#fff;border:1px solid #b4b4b4"></div>
<div class="a" style="left:527px;top:447.8px;width:9.5px;height:11.0px;background:#f0f0f0;border:1px solid #b8b8b8"></div>
<svg class="a" style="left:529.5px;top:449.3px;" width="4" height="8" viewBox="0 0 4 8"><path d="M0.3 2.5 L2 0.6 L3.7 2.5 M0.3 5.5 L2 7.4 L3.7 5.5" fill="none" stroke="#333" stroke-width="1"/></svg>
<div class="t" style="left:-76.50px;width:600px;text-align:right;top:449.69px;font-size:7.5px;color:#333;font-weight:400;">5</div>
<div class="t" style="left:266.60px;top:466.57px;font-size:8.16px;color:#444;font-weight:400;">Allow creation of new task(s)</div>
<div class="a" style="left:373.2px;top:466.6px;width:8px;height:8px;border:1px solid #b0b0b0;background:#fff"></div>
<svg class="a" style="left:374.2px;top:467.6px;" width="6" height="6" viewBox="0 0 6 6"><path d="M0.8 3 L2.5 4.8 L5.3 0.8" stroke="#555" stroke-width=".9" fill="none"/></svg>
<div class="a" style="left:544px;top:340px;width:1px;height:1.5px;background:#aaa"></div>
<div class="a" style="left:544px;top:343px;width:1px;height:1.5px;background:#aaa"></div>
<div class="a" style="left:544px;top:346px;width:1px;height:1.5px;background:#aaa"></div>
<div class="a" style="left:1119px;top:620.6px;width:46.7px;height:13.6px;background:linear-gradient(180deg,#f6f6f6,#e2e2e2);border:1px solid #acacac"></div>
<div class="t" style="left:842.40px;width:600px;text-align:center;top:623.78px;font-size:7.5px;color:#222;font-weight:400;">OK</div>
<div class="a" style="left:550px;top:212.4px;width:608.5px;height:389.80000000000007px;background:#fff;border:1px solid #bdbdbd"></div>
<div class="a" style="left:550px;top:230px;width:608.5px;height:1px;background:#a8a8a8"></div>
<div class="t" style="left:558.00px;top:217.31px;font-size:10.5px;color:#444;font-weight:400;letter-spacing:-0.15px;">Preview</div>
<div class="a" style="left:551.4px;top:248px;width:36px;height:15px;background:#fff;border:1px solid #d6d6d6;border-bottom:none"></div>
<div class="a" style="left:587px;top:262.5px;width:570.5px;height:1px;background:#e2e2e2"></div>
<div class="a" style="left:551.5px;top:262.5px;width:35.5px;height:1px;background:#fff"></div>
<div class="t" style="left:559.00px;top:252.73px;font-size:7.4px;color:#1f70c4;font-weight:400;">Home</div>
<div class="t" style="left:596.40px;top:252.83px;font-size:7.2px;color:#444;font-weight:400;">Insert</div>
<div class="t" style="left:631.90px;top:252.83px;font-size:7.2px;color:#444;font-weight:400;">Formulas</div>
<div class="t" style="left:679.90px;top:252.83px;font-size:7.2px;color:#444;font-weight:400;">Data</div>
<div class="t" style="left:713.00px;top:252.83px;font-size:7.2px;color:#444;font-weight:400;">Review</div>
<div class="t" style="left:752.80px;top:252.83px;font-size:7.2px;color:#444;font-weight:400;">View</div>
<div class="a" style="left:551px;top:319.3px;width:606.5px;height:1px;background:#d8d8d8"></div>
<div class="a" style="left:638px;top:265px;width:1px;height:51.5px;background:#e0e0e0"></div>
<div class="a" style="left:805.6px;top:265px;width:1px;height:51.5px;background:#e0e0e0"></div>
<div class="a" style="left:916.4px;top:265px;width:1px;height:51.5px;background:#e0e0e0"></div>
<div class="a" style="left:970.3px;top:265px;width:1px;height:51.5px;background:#e0e0e0"></div>
<div class="a" style="left:1019.6px;top:265px;width:1px;height:51.5px;background:#e0e0e0"></div>
<div class="a" style="left:1070.7px;top:265px;width:1px;height:51.5px;background:#e0e0e0"></div>
<div class="a" style="left:1151.5px;top:265px;width:1px;height:51.5px;background:#e0e0e0"></div>
<div class="t" style="left:294.50px;width:600px;text-align:center;top:309.73px;font-size:7.4px;color:#444;font-weight:400;">Clipboard</div>
<div class="t" style="left:418.50px;width:600px;text-align:center;top:309.73px;font-size:7.4px;color:#444;font-weight:400;">Font</div>
<div class="t" style="left:557.50px;width:600px;text-align:center;top:309.73px;font-size:7.4px;color:#444;font-weight:400;">Alignment</div>
<div class="t" style="left:639.80px;width:600px;text-align:center;top:309.73px;font-size:7.4px;color:#444;font-weight:400;">Number</div>
<div class="t" style="left:694.50px;width:600px;text-align:center;top:309.73px;font-size:7.4px;color:#444;font-weight:400;">Styles</div>
<div class="t" style="left:745.70px;width:600px;text-align:center;top:309.73px;font-size:7.4px;color:#444;font-weight:400;">Cells</div>
<div class="t" style="left:811.60px;width:600px;text-align:center;top:309.73px;font-size:7.4px;color:#444;font-weight:400;">Editing</div>
<svg class="a" style="left:798.5px;top:311px;" width="5" height="5" viewBox="0 0 5 5"><path d="M0.5 0.5 H3 M0.5 0.5 V3" stroke="#777" stroke-width=".8" fill="none"/><path d="M2 2 L4.5 4.5 M4.5 2.5 V4.5 H2.5" stroke="#555" stroke-width=".8" fill="none"/></svg>
<svg class="a" style="left:908.7px;top:311px;" width="5" height="5" viewBox="0 0 5 5"><path d="M0.5 0.5 H3 M0.5 0.5 V3" stroke="#777" stroke-width=".8" fill="none"/><path d="M2 2 L4.5 4.5 M4.5 2.5 V4.5 H2.5" stroke="#555" stroke-width=".8" fill="none"/></svg>
<svg class="a" style="left:962.2px;top:311px;" width="5" height="5" viewBox="0 0 5 5"><path d="M0.5 0.5 H3 M0.5 0.5 V3" stroke="#777" stroke-width=".8" fill="none"/><path d="M2 2 L4.5 4.5 M4.5 2.5 V4.5 H2.5" stroke="#555" stroke-width=".8" fill="none"/></svg>
<svg class="a" style="left:556px;top:265.5px;" width="17" height="18" viewBox="0 0 17 18"><rect x="0.5" y="2" width="11" height="15" rx="1" fill="#e8b040" stroke="#b88a30" stroke-width=".8"/><rect x="3" y="0.5" width="6" height="3" fill="#8a9aaa"/><rect x="5" y="6" width="11" height="11.5" fill="#f0f4fa" stroke="#5a7ab0" stroke-width=".9"/><path d="M7.5 10 H13.5 M7.5 12.5 H13.5" stroke="#5a7ab0" stroke-width=".9"/></svg>
<div class="t" style="left:264.50px;width:600px;text-align:center;top:289.62px;font-size:6.8px;color:#444;font-weight:400;">Paste</div>
<svg class="a" style="left:579px;top:266px;" width="10" height="10" viewBox="0 0 10 10"><circle cx="2.5" cy="7.5" r="2" fill="none" stroke="#3a78c0" stroke-width="1.3"/><circle cx="7.5" cy="7.5" r="2" fill="none" stroke="#3a78c0" stroke-width="1.3"/><path d="M3.5 5.5 L8.5 0.5 M6.5 5.5 L1.5 0.5" stroke="#7a8a9a" stroke-width="1.1"/></svg>
<div class="t" style="left:590.60px;top:267.38px;font-size:7.3px;color:#333;font-weight:400;">Cut</div>
<svg class="a" style="left:579px;top:281px;" width="10" height="10" viewBox="0 0 10 10"><rect x="3" y="0.5" width="6" height="7" fill="#fff" stroke="#5a7ab0" stroke-width=".9"/><rect x="0.5" y="2.5" width="6" height="7" fill="#fff" stroke="#5a7ab0" stroke-width=".9"/></svg>
<div class="t" style="left:590.60px;top:282.28px;font-size:7.3px;color:#333;font-weight:400;">Copy</div>
<svg class="a" style="left:579px;top:295px;" width="10" height="10" viewBox="0 0 10 10"><rect x="0.5" y="1" width="7" height="8.5" fill="#e8b040"/><rect x="4" y="5" width="6" height="5" fill="#3a78c0"/><rect x="2" y="0" width="3" height="2" fill="#777"/></svg>
<div class="t" style="left:590.60px;top:296.38px;font-size:7.3px;color:#333;font-weight:400;">Paste Special</div>
<div class="a" style="left:641.5px;top:264.8px;width:94.5px;height:12.8px;border:1px solid #c6c6c6;background:#fff"></div>
<div class="t" style="left:645.00px;top:267.68px;font-size:7.3px;color:#333;font-weight:400;">Calibri</div>
<div class="a" style="left:725.5px;top:266px;width:10px;height:10.5px;background:#ececec;border:1px solid #c8c8c8"></div>
<svg class="a" style="left:728.5px;top:269.8px;" width="4" height="3" viewBox="0 0 4 3"><path d="M0.2 0.3 L2 2.5 L3.8 0.3" fill="none" stroke="#555" stroke-width=".9"/></svg>
<div class="a" style="left:741.2px;top:264.3px;width:31px;height:13.2px;border:1px solid #c6c6c6;background:#fff"></div>
<div class="t" style="left:744.50px;top:267.48px;font-size:7.3px;color:#333;font-weight:400;">15</div>
<div class="a" style="left:761.5px;top:265.5px;width:10px;height:11px;background:#ececec;border:1px solid #c8c8c8"></div>
<svg class="a" style="left:764.5px;top:269.5px;" width="4" height="3" viewBox="0 0 4 3"><path d="M0.2 0.3 L2 2.5 L3.8 0.3" fill="none" stroke="#555" stroke-width=".9"/></svg>
<div class="t" style="left:779.00px;top:266.18px;font-size:10px;color:#2a4f8a;font-weight:700;font-family:'Liberation Serif';">A</div>
<div class="t" style="left:777.00px;top:265.11px;font-size:6px;color:#2a4f8a;font-weight:700;">&#710;</div>
<div class="t" style="left:793.50px;top:267.40px;font-size:8.5px;color:#2a4f8a;font-weight:700;font-family:'Liberation Serif';">A</div>
<div class="t" style="left:791.50px;top:265.59px;font-size:5px;color:#2a4f8a;font-weight:700;">&#710;</div>
<div class="a" style="left:639.8px;top:278px;width:14px;height:13.6px;background:#a8cdec"></div>
<div class="t" style="left:346.80px;width:600px;text-align:center;top:281.14px;font-size:8px;color:#333;font-weight:700;font-family:'Liberation Serif';">B</div>
<div class="t" style="left:360.90px;width:600px;text-align:center;top:281.14px;font-size:8px;color:#333;font-weight:700;font-family:'Liberation Serif';font-style:italic;">I</div>
<div class="t" style="left:375.80px;width:600px;text-align:center;top:281.14px;font-size:8px;color:#333;font-weight:700;font-family:'Liberation Serif';text-decoration:underline;">U</div>
<div class="t" style="left:389.90px;width:600px;text-align:center;top:281.14px;font-size:8px;color:#333;font-weight:700;font-family:'Liberation Serif';text-decoration:line-through;">S</div>
<div class="t" style="left:346.80px;width:600px;text-align:center;top:295.64px;font-size:8px;color:#333;font-weight:700;font-family:'Liberation Serif';">A</div>
<div class="a" style="left:641px;top:303.5px;width:11.5px;height:2px;background:#111"></div>
<svg class="a" style="left:655px;top:299px;" width="4" height="3" viewBox="0 0 4 3"><path d="M0 0 H4 L2 2.5Z" fill="#555"/></svg>
<svg class="a" style="left:664px;top:294px;" width="11" height="9" viewBox="0 0 11 9"><path d="M1 5 L5 0.5 L9 4 L5 8Z" fill="#e8b040"/><rect x="4" y="3" width="6" height="4" fill="#5a9a3a"/></svg>
<div class="a" style="left:664px;top:303.5px;width:11.5px;height:2px;background:#111"></div>
<svg class="a" style="left:678px;top:299px;" width="4" height="3" viewBox="0 0 4 3"><path d="M0 0 H4 L2 2.5Z" fill="#555"/></svg>
<svg class="a" style="left:685px;top:295px;" width="9" height="9" viewBox="0 0 9 9"><rect x="0.5" y="0.5" width="8" height="8" fill="none" stroke="#3a78c0" stroke-width="1"/><path d="M4.5 0.5 V8.5 M0.5 4.5 H8.5" stroke="#3a78c0" stroke-width="1"/></svg>
<svg class="a" style="left:697px;top:299px;" width="4" height="3" viewBox="0 0 4 3"><path d="M0 0 H4 L2 2.5Z" fill="#555"/></svg>
<div class="a" style="left:836.2px;top:263.9px;width:13.8px;height:13.6px;background:#a8cdec"></div>
<svg class="a" style="left:809.2px;top:265.7px;" width="10" height="10" viewBox="0 0 10 10"><rect x="0.5" y="0.5" width="9" height="9" fill="#eef4fb" stroke="#6a9ad0" stroke-width=".9"/><rect x="2.5" y="2" width="5" height="1.5" fill="#3a6ab0"/></svg>
<svg class="a" style="left:823.6px;top:265.7px;" width="10" height="10" viewBox="0 0 10 10"><rect x="0.5" y="0.5" width="9" height="9" fill="#eef4fb" stroke="#6a9ad0" stroke-width=".9"/><rect x="2.5" y="4.5" width="5" height="1.5" fill="#3a6ab0"/></svg>
<svg class="a" style="left:838px;top:265.7px;" width="10" height="10" viewBox="0 0 10 10"><rect x="0.5" y="0.5" width="9" height="9" fill="#eef4fb" stroke="#6a9ad0" stroke-width=".9"/><rect x="2.5" y="6.5" width="5" height="1.5" fill="#3a6ab0"/></svg>
<svg class="a" style="left:809.2px;top:279.7px;" width="10" height="10" viewBox="0 0 10 10"><g fill="#333"><rect x="0" y="1.5" width="9" height="1.3"/><rect x="0" y="4" width="5.5" height="1.3"/><rect x="0" y="6.5" width="9" height="1.3"/></g></svg>
<svg class="a" style="left:823.6px;top:279.7px;" width="10" height="10" viewBox="0 0 10 10"><g fill="#333"><rect x="0.0" y="1.5" width="9" height="1.3"/><rect x="1.75" y="4" width="5.5" height="1.3"/><rect x="0.0" y="6.5" width="9" height="1.3"/></g></svg>
<svg class="a" style="left:838px;top:279.7px;" width="10" height="10" viewBox="0 0 10 10"><g fill="#333"><rect x="0" y="1.5" width="9" height="1.3"/><rect x="3.5" y="4" width="5.5" height="1.3"/><rect x="0" y="6.5" width="9" height="1.3"/></g></svg>
<svg class="a" style="left:809.2px;top:294.1px;" width="10" height="10" viewBox="0 0 10 10"><g fill="#333"><rect x="0" y="0.5" width="9" height="1.2"/><rect x="0" y="7.5" width="9" height="1.2"/><rect x="4" y="3.5" width="5" height="2"/></g><path d="M0.5 4.5 L3 3 V6Z" fill="#3a78c0"/></svg>
<svg class="a" style="left:823.6px;top:294.1px;" width="10" height="10" viewBox="0 0 10 10"><g fill="#333"><rect x="0" y="0.5" width="9" height="1.2"/><rect x="0" y="7.5" width="9" height="1.2"/><rect x="4" y="3.5" width="5" height="2"/></g><path d="M0.5 4.5 L3 3 V6Z" fill="#3a78c0"/></svg>
<svg class="a" style="left:852.5px;top:266px;" width="10.5" height="10" viewBox="0 0 10.5 10"><rect x="0.5" y="0.5" width="9.5" height="9" fill="#fff" stroke="#6a7ab0" stroke-width=".9"/><path d="M2 3 H8.5 M2 5 H7 M2 7 H5" stroke="#335" stroke-width="1"/></svg>
<div class="t" style="left:864.70px;top:267.68px;font-size:7.3px;color:#333;font-weight:400;">Wrap Text</div>
<svg class="a" style="left:852.5px;top:280.5px;" width="10.5" height="10" viewBox="0 0 10.5 10"><rect x="0.5" y="0.5" width="9.5" height="9" fill="#6cc030" stroke="#5a7ab0" stroke-width=".9"/><rect x="2" y="3" width="6.5" height="4" fill="#3a7a20"/></svg>
<div class="t" style="left:864.70px;top:282.08px;font-size:7.3px;color:#333;font-weight:400;">Merge Cells</div>
<svg class="a" style="left:908.5px;top:284.5px;" width="4" height="3" viewBox="0 0 4 3"><path d="M0 0 H4 L2 2.5Z" fill="#555"/></svg>
<svg class="a" style="left:919.4px;top:268.5px;" width="11" height="11" viewBox="0 0 11 11"><circle cx="4" cy="4" r="3.5" fill="#f0b070"/><circle cx="6.5" cy="6.5" r="3.8" fill="#4cb030"/><text x="5" y="8.5" font-size="5" fill="#fff" font-family="Liberation Sans">$</text></svg>
<svg class="a" style="left:934px;top:273px;" width="4" height="3" viewBox="0 0 4 3"><path d="M0 0 H4 L2 2.5Z" fill="#333"/></svg>
<div class="t" style="left:942.30px;top:269.14px;font-size:10.5px;color:#34506e;font-weight:700;">%</div>
<div class="t" style="left:960.00px;top:265.97px;font-size:12.5px;color:#1f3a60;font-weight:700;font-family:'Liberation Serif';">,</div>
<svg class="a" style="left:920.4px;top:291px;" width="10" height="9" viewBox="0 0 10 9"><path d="M0.3 2 L2.3 0.3 V3.7Z" fill="#3a7ad0"/><rect x="2" y="1.4" width="1.5" height="1.2" fill="#3a7ad0"/><rect x="4.4" y="2.4" width="1.3" height="1.3" fill="#2a4f8a"/><ellipse cx="7.6" cy="2" rx="1.25" ry="1.35" fill="none" stroke="#2a4f8a" stroke-width="1"/><rect x="0.20000000000000007" y="6.9" width="1.3" height="1.3" fill="#2a4f8a"/><ellipse cx="3.3" cy="6.6" rx="1.25" ry="1.35" fill="none" stroke="#2a4f8a" stroke-width="1"/><ellipse cx="6.8" cy="6.6" rx="1.25" ry="1.35" fill="none" stroke="#2a4f8a" stroke-width="1"/></svg>
<svg class="a" style="left:934px;top:291px;" width="10" height="9" viewBox="0 0 10 9"><rect x="0.20000000000000007" y="2.4" width="1.3" height="1.3" fill="#2a4f8a"/><ellipse cx="3.5" cy="2" rx="1.25" ry="1.35" fill="none" stroke="#2a4f8a" stroke-width="1"/><ellipse cx="7" cy="2" rx="1.25" ry="1.35" fill="none" stroke="#2a4f8a" stroke-width="1"/><path d="M0.3 6.8 L2.3 5.1 V8.5Z" fill="#3a7ad0"/><rect x="2" y="6.2" width="1.5" height="1.2" fill="#3a7ad0"/><rect x="4.4" y="7.2" width="1.3" height="1.3" fill="#2a4f8a"/><ellipse cx="7.6" cy="6.8" rx="1.25" ry="1.35" fill="none" stroke="#2a4f8a" stroke-width="1"/></svg>
<svg class="a" style="left:985px;top:267.6px;" width="19" height="16.5" viewBox="0 0 19 16.5"><rect x="0.5" y="0.5" width="18" height="15.5" fill="#fff" stroke="#6a8ac8" stroke-width="1"/><path d="M0.5 4.5 H18.5 M0.5 8.5 H18.5 M0.5 12.5 H18.5 M6.5 0.5 V16 M12.5 0.5 V16" stroke="#9ab4dc" stroke-width=".8"/><rect x="7" y="5" width="5" height="3" fill="#f0a040"/><rect x="13" y="9" width="5" height="3" fill="#6ab840"/><rect x="1" y="9" width="5" height="3" fill="#e04040"/></svg>
<div class="t" style="left:694.50px;width:600px;text-align:center;top:289.44px;font-size:7.6px;color:#444;font-weight:400;">Conditional</div>
<div class="t" style="left:693.00px;width:600px;text-align:center;top:297.84px;font-size:7.6px;color:#444;font-weight:400;">Formatting</div>
<svg class="a" style="left:1012.5px;top:300.5px;" width="4" height="3" viewBox="0 0 4 3"><path d="M0 0 H4 L2 2.5Z" fill="#444"/></svg>
<svg class="a" style="left:1023px;top:266.3px;" width="11" height="10.5" viewBox="0 0 11 10.5"><rect x="0.5" y="0.5" width="10" height="2.2" fill="#dde6f4" stroke="#7a94c8" stroke-width=".7"/><rect x="0.5" y="7.3" width="10" height="2.2" fill="#dde6f4" stroke="#7a94c8" stroke-width=".7"/><rect x="6" y="3.6" width="4.5" height="2.8" fill="#4a90d8"/><path d="M1.5 5 H5.5 M1.5 5 L3 3.8 M1.5 5 L3 6.2" stroke="#345" stroke-width=".8" fill="none"/></svg>
<div class="t" style="left:1035.90px;top:267.78px;font-size:7.3px;color:#444;font-weight:400;">Insert</div>
<svg class="a" style="left:1058.3px;top:270.1px;" width="4" height="3" viewBox="0 0 4 3"><path d="M0 0 H4 L2 2.5Z" fill="#444"/></svg>
<svg class="a" style="left:1023px;top:280.5px;" width="11" height="10.5" viewBox="0 0 11 10.5"><rect x="0.5" y="0.5" width="8" height="6" fill="#eef2fa" stroke="#7a94c8" stroke-width=".7"/><path d="M0.5 3.5 H8.5 M4.5 0.5 V6.5" stroke="#9ab0d8" stroke-width=".6"/><rect x="2" y="1.8" width="2" height="1.4" fill="#4a90d8"/><path d="M5.2 5.6 L9.6 10 M9.6 5.6 L5.2 10" stroke="#e03a3a" stroke-width="1.7"/></svg>
<div class="t" style="left:1035.90px;top:281.98px;font-size:7.3px;color:#444;font-weight:400;">Delete</div>
<svg class="a" style="left:1061.3px;top:284.3px;" width="4" height="3" viewBox="0 0 4 3"><path d="M0 0 H4 L2 2.5Z" fill="#444"/></svg>
<svg class="a" style="left:1023px;top:294.7px;" width="11" height="10.5" viewBox="0 0 11 10.5"><rect x="0.5" y="0.5" width="8" height="6.5" fill="#eef2fa" stroke="#7a94c8" stroke-width=".7"/><path d="M0.5 3.5 H8.5 M4.5 0.5 V7" stroke="#9ab0d8" stroke-width=".6"/><rect x="2" y="1.8" width="2" height="1.4" fill="#4a90d8"/><circle cx="7.6" cy="7.8" r="2.4" fill="#5a7ab8" stroke="#2a4a80" stroke-width=".6"/></svg>
<div class="t" style="left:1035.90px;top:296.18px;font-size:7.3px;color:#444;font-weight:400;">Format</div>
<svg class="a" style="left:1063.3px;top:298.5px;" width="4" height="3" viewBox="0 0 4 3"><path d="M0 0 H4 L2 2.5Z" fill="#444"/></svg>
<svg class="a" style="left:1075.2px;top:266.3px;" width="8.5" height="10" viewBox="0 0 8.5 10"><path d="M8 2.6 V0.8 H0.8 L4.4 5 L0.8 9.2 H8 V7.4" fill="none" stroke="#e89020" stroke-width="1.7" stroke-linejoin="miter"/></svg>
<div class="t" style="left:1086.70px;top:267.78px;font-size:7.3px;color:#444;font-weight:400;">AutoSum</div>
<svg class="a" style="left:1121.6px;top:270px;" width="4" height="3" viewBox="0 0 4 3"><path d="M0 0 H4 L2 2.5Z" fill="#444"/></svg>
<svg class="a" style="left:1130px;top:265.5px;" width="11" height="11" viewBox="0 0 11 11"><path d="M0 1 H7 L4.5 5 V9 L2.5 10 V5Z" fill="#f0b030"/><text x="6" y="5" font-size="5" fill="#2a5aa0" font-family="Liberation Sans" font-weight="700">A</text><text x="6" y="10.5" font-size="5" fill="#d03030" font-family="Liberation Sans" font-weight="700">Z</text></svg>
<svg class="a" style="left:1144px;top:270px;" width="4" height="3" viewBox="0 0 4 3"><path d="M0 0 H4 L2 2.5Z" fill="#444"/></svg>
<svg class="a" style="left:1074.3px;top:280.5px;" width="10" height="10" viewBox="0 0 10 10"><rect x="0.5" y="0.5" width="9" height="9" fill="#eef4fb" stroke="#5a8ac8" stroke-width=".9"/><path d="M5 2.5 V7 M3 5 L5 7.5 L7 5" stroke="#2a5aa0" stroke-width="1.2" fill="none"/></svg>
<div class="t" style="left:1086.70px;top:281.98px;font-size:7.3px;color:#444;font-weight:400;">Fill</div>
<svg class="a" style="left:1099.6px;top:284.2px;" width="4" height="3" viewBox="0 0 4 3"><path d="M0 0 H4 L2 2.5Z" fill="#444"/></svg>
<svg class="a" style="left:1130px;top:281px;" width="10.5" height="8.5" viewBox="0 0 10.5 8.5"><circle cx="2.8" cy="5.5" r="2.6" fill="none" stroke="#2a5aa0" stroke-width="1.4"/><circle cx="7.7" cy="5.5" r="2.6" fill="none" stroke="#2a5aa0" stroke-width="1.4"/><rect x="2" y="0.5" width="6.5" height="3" fill="#2a5aa0"/></svg>
<svg class="a" style="left:1144px;top:284.2px;" width="4" height="3" viewBox="0 0 4 3"><path d="M0 0 H4 L2 2.5Z" fill="#444"/></svg>
<svg class="a" style="left:1075.2px;top:295px;" width="10" height="9" viewBox="0 0 10 9"><path d="M0.5 6.5 L6 1 L9.5 4.5 L4 9Z" fill="#e85a5a"/><path d="M0.5 6.5 L3 4 L6.5 7.5 L4 9Z" fill="#3a8ad0"/></svg>
<div class="t" style="left:1086.70px;top:296.18px;font-size:7.3px;color:#444;font-weight:400;">Clear</div>
<svg class="a" style="left:1107.5px;top:298.4px;" width="4" height="3" viewBox="0 0 4 3"><path d="M0 0 H4 L2 2.5Z" fill="#444"/></svg>
<div class="a" style="left:554px;top:326.2px;width:60px;height:16.5px;border:1px solid #c6c6c6;background:#fff"></div>
<div class="t" style="left:557.00px;top:330.98px;font-size:7.3px;color:#333;font-weight:400;">F1</div>
<div class="a" style="left:603.8px;top:327.5px;width:9.5px;height:14px;background:#ececec;border:1px solid #c8c8c8"></div>
<svg class="a" style="left:606.5px;top:333px;" width="4" height="3" viewBox="0 0 4 3"><path d="M0.2 0.3 L2 2.5 L3.8 0.3" fill="none" stroke="#555" stroke-width=".9"/></svg>
<div class="a" style="left:623px;top:330.5px;width:1.2px;height:1.5px;background:#999"></div>
<div class="a" style="left:623px;top:333.5px;width:1.2px;height:1.5px;background:#999"></div>
<div class="a" style="left:623px;top:336.5px;width:1.2px;height:1.5px;background:#999"></div>
<div class="a" style="left:632.6px;top:326.2px;width:46.6px;height:16.5px;border:1px solid #c6c6c6;background:#fff"></div>
<svg class="a" style="left:638.3px;top:331.5px;" width="5" height="5" viewBox="0 0 5 5"><path d="M0.3 0.3 L4.7 4.7 M4.7 0.3 L0.3 4.7" stroke="#aaa" stroke-width=".8"/></svg>
<svg class="a" style="left:653.3px;top:331.5px;" width="6" height="5" viewBox="0 0 6 5"><path d="M0.3 2.8 L2 4.6 L5.7 0.4" stroke="#aaa" stroke-width=".8" fill="none"/></svg>
<div class="t" style="left:668.50px;top:330.88px;font-size:7.5px;color:#aaa;font-weight:400;font-family:'Liberation Serif';"><i>f</i><span style="font-size:5px">x</span></div>
<div class="a" style="left:681.4px;top:326.2px;width:473.3px;height:16.5px;border:1px solid #c6c6c6;background:#fff"></div>
<div class="t" style="left:684.50px;top:331.03px;font-size:7.2px;color:#333;font-weight:400;">Engineer</div>
<svg class="a" style="left:1146.3px;top:333px;" width="5" height="3" viewBox="0 0 5 3"><path d="M0.3 2.7 L2.5 0.4 L4.7 2.7" fill="none" stroke="#444" stroke-width=".9"/></svg>
<div class="a" style="left:551px;top:365.2px;width:14px;height:226.3px;background:#d6d6d6"></div>
<div class="a" style="left:924.5px;top:351.7px;width:53.5px;height:13.5px;background:#d4d4d4"></div>
<div class="a" style="left:551px;top:351.7px;width:596px;height:1px;background:#dcdcdc"></div>
<div class="a" style="left:565px;top:365.2px;width:582px;height:1px;background:#e2e2e2"></div>
<div class="a" style="left:551px;top:365.2px;width:14px;height:1px;background:#c8c8c8"></div>
<div class="a" style="left:565px;top:381.3px;width:582px;height:1px;background:#e2e2e2"></div>
<div class="a" style="left:551px;top:381.3px;width:14px;height:1px;background:#c8c8c8"></div>
<div class="a" style="left:565px;top:393.90000000000003px;width:582px;height:1px;background:#e2e2e2"></div>
<div class="a" style="left:551px;top:393.90000000000003px;width:14px;height:1px;background:#c8c8c8"></div>
<div class="a" style="left:565px;top:406.5px;width:582px;height:1px;background:#e2e2e2"></div>
<div class="a" style="left:551px;top:406.5px;width:14px;height:1px;background:#c8c8c8"></div>
<div class="a" style="left:565px;top:419.1px;width:582px;height:1px;background:#e2e2e2"></div>
<div class="a" style="left:551px;top:419.1px;width:14px;height:1px;background:#c8c8c8"></div>
<div class="a" style="left:565px;top:431.7px;width:582px;height:1px;background:#e2e2e2"></div>
<div class="a" style="left:551px;top:431.7px;width:14px;height:1px;background:#c8c8c8"></div>
<div class="a" style="left:565px;top:444.3px;width:582px;height:1px;background:#e2e2e2"></div>
<div class="a" style="left:551px;top:444.3px;width:14px;height:1px;background:#c8c8c8"></div>
<div class="a" style="left:565px;top:456.9px;width:582px;height:1px;background:#e2e2e2"></div>
<div class="a" style="left:551px;top:456.9px;width:14px;height:1px;background:#c8c8c8"></div>
<div class="a" style="left:565px;top:469.5px;width:582px;height:1px;background:#e2e2e2"></div>
<div class="a" style="left:551px;top:469.5px;width:14px;height:1px;background:#c8c8c8"></div>
<div class="a" style="left:565px;top:482.1px;width:582px;height:1px;background:#e2e2e2"></div>
<div class="a" style="left:551px;top:482.1px;width:14px;height:1px;background:#c8c8c8"></div>
<div class="a" style="left:565px;top:494.7px;width:582px;height:1px;background:#e2e2e2"></div>
<div class="a" style="left:551px;top:494.7px;width:14px;height:1px;background:#c8c8c8"></div>
<div class="a" style="left:565px;top:507.3px;width:582px;height:1px;background:#e2e2e2"></div>
<div class="a" style="left:551px;top:507.3px;width:14px;height:1px;background:#c8c8c8"></div>
<div class="a" style="left:565px;top:519.9px;width:582px;height:1px;background:#e2e2e2"></div>
<div class="a" style="left:551px;top:519.9px;width:14px;height:1px;background:#c8c8c8"></div>
<div class="a" style="left:565px;top:532.5px;width:582px;height:1px;background:#e2e2e2"></div>
<div class="a" style="left:551px;top:532.5px;width:14px;height:1px;background:#c8c8c8"></div>
<div class="a" style="left:565px;top:545.1px;width:582px;height:1px;background:#e2e2e2"></div>
<div class="a" style="left:551px;top:545.1px;width:14px;height:1px;background:#c8c8c8"></div>
<div class="a" style="left:565px;top:557.7px;width:582px;height:1px;background:#e2e2e2"></div>
<div class="a" style="left:551px;top:557.7px;width:14px;height:1px;background:#c8c8c8"></div>
<div class="a" style="left:565px;top:570.3px;width:582px;height:1px;background:#e2e2e2"></div>
<div class="a" style="left:551px;top:570.3px;width:14px;height:1px;background:#c8c8c8"></div>
<div class="a" style="left:565px;top:582.9px;width:582px;height:1px;background:#e2e2e2"></div>
<div class="a" style="left:551px;top:582.9px;width:14px;height:1px;background:#c8c8c8"></div>
<div class="a" style="left:565px;top:591.5px;width:582px;height:1px;background:#e2e2e2"></div>
<div class="a" style="left:551px;top:591.5px;width:14px;height:1px;background:#c8c8c8"></div>
<div class="a" style="left:565px;top:351.7px;width:1px;height:239.8px;background:#e0e0e0"></div>
<div class="a" style="left:596px;top:351.7px;width:1px;height:239.8px;background:#e0e0e0"></div>
<div class="a" style="left:724px;top:351.7px;width:1px;height:239.8px;background:#e0e0e0"></div>
<div class="a" style="left:797.6px;top:351.7px;width:1px;height:239.8px;background:#e0e0e0"></div>
<div class="a" style="left:872px;top:351.7px;width:1px;height:239.8px;background:#e0e0e0"></div>
<div class="a" style="left:924.5px;top:351.7px;width:1px;height:239.8px;background:#e0e0e0"></div>
<div class="a" style="left:978px;top:351.7px;width:1px;height:239.8px;background:#e0e0e0"></div>
<div class="a" style="left:1045.8px;top:351.7px;width:1px;height:239.8px;background:#e0e0e0"></div>
<div class="a" style="left:1085.8px;top:351.7px;width:1px;height:239.8px;background:#e0e0e0"></div>
<div class="a" style="left:1126.7px;top:351.7px;width:1px;height:239.8px;background:#e0e0e0"></div>
<div class="a" style="left:595.3px;top:351.7px;width:1.6px;height:239.8px;background:#d6d6d6"></div>
<div class="t" style="left:280.50px;width:600px;text-align:center;top:355.93px;font-size:7.0px;color:#555;font-weight:400;">A</div>
<div class="t" style="left:360.00px;width:600px;text-align:center;top:355.93px;font-size:7.0px;color:#555;font-weight:400;">B</div>
<div class="t" style="left:460.80px;width:600px;text-align:center;top:355.93px;font-size:7.0px;color:#555;font-weight:400;">C</div>
<div class="t" style="left:534.80px;width:600px;text-align:center;top:355.93px;font-size:7.0px;color:#555;font-weight:400;">D</div>
<div class="t" style="left:598.25px;width:600px;text-align:center;top:355.93px;font-size:7.0px;color:#555;font-weight:400;">E</div>
<div class="t" style="left:651.25px;width:600px;text-align:center;top:355.93px;font-size:7.0px;color:#555;font-weight:400;">F</div>
<div class="t" style="left:711.90px;width:600px;text-align:center;top:355.93px;font-size:7.0px;color:#555;font-weight:400;">G</div>
<div class="t" style="left:765.80px;width:600px;text-align:center;top:355.93px;font-size:7.0px;color:#555;font-weight:400;">H</div>
<div class="t" style="left:806.25px;width:600px;text-align:center;top:355.93px;font-size:7.0px;color:#555;font-weight:400;">I</div>
<div class="t" style="left:840.00px;width:600px;text-align:center;top:355.93px;font-size:7.0px;color:#555;font-weight:400;">.</div>
<div class="t" style="left:257.80px;width:600px;text-align:center;top:370.08px;font-size:7.4px;color:#505050;font-weight:400;">1</div>
<div class="t" style="left:257.80px;width:600px;text-align:center;top:384.43px;font-size:7.4px;color:#505050;font-weight:400;">2</div>
<div class="t" style="left:257.80px;width:600px;text-align:center;top:397.03px;font-size:7.4px;color:#505050;font-weight:400;">3</div>
<div class="t" style="left:257.80px;width:600px;text-align:center;top:409.63px;font-size:7.4px;color:#505050;font-weight:400;">4</div>
<div class="t" style="left:257.80px;width:600px;text-align:center;top:422.23px;font-size:7.4px;color:#505050;font-weight:400;">5</div>
<div class="t" style="left:257.80px;width:600px;text-align:center;top:434.83px;font-size:7.4px;color:#505050;font-weight:400;">6</div>
<div class="t" style="left:257.80px;width:600px;text-align:center;top:447.43px;font-size:7.4px;color:#505050;font-weight:400;">7</div>
<div class="t" style="left:257.80px;width:600px;text-align:center;top:460.03px;font-size:7.4px;color:#505050;font-weight:400;">8</div>
<div class="t" style="left:257.80px;width:600px;text-align:center;top:472.63px;font-size:7.4px;color:#505050;font-weight:400;">9</div>
<div class="t" style="left:257.80px;width:600px;text-align:center;top:485.23px;font-size:7.4px;color:#505050;font-weight:400;">10</div>
<div class="t" style="left:257.80px;width:600px;text-align:center;top:497.83px;font-size:7.4px;color:#505050;font-weight:400;">11</div>
<div class="t" style="left:257.80px;width:600px;text-align:center;top:510.43px;font-size:7.4px;color:#505050;font-weight:400;">12</div>
<div class="t" style="left:257.80px;width:600px;text-align:center;top:523.03px;font-size:7.4px;color:#505050;font-weight:400;">13</div>
<div class="t" style="left:257.80px;width:600px;text-align:center;top:535.63px;font-size:7.4px;color:#505050;font-weight:400;">14</div>
<div class="t" style="left:257.80px;width:600px;text-align:center;top:548.23px;font-size:7.4px;color:#505050;font-weight:400;">15</div>
<div class="t" style="left:257.80px;width:600px;text-align:center;top:560.83px;font-size:7.4px;color:#505050;font-weight:400;">16</div>
<div class="t" style="left:257.80px;width:600px;text-align:center;top:573.43px;font-size:7.4px;color:#505050;font-weight:400;">17</div>
<div class="a" style="left:551px;top:584px;width:14px;height:7.5px;overflow:hidden"><div class="t" style="left:0;width:14px;text-align:center;top:2.1px;font-size:7px;color:#444">18</div></div>
<div class="a" style="left:924px;top:365.2px;width:54.5px;height:16.800000000000022px;background:#c6dcef"></div>
<div class="t" style="left:566.20px;top:369.07px;font-size:10.9px;color:#333;font-weight:700;">Item</div>
<div class="t" style="left:598.00px;top:369.07px;font-size:10.9px;color:#333;font-weight:700;">Work To Be Performed</div>
<div class="t" style="left:725.20px;top:369.07px;font-size:10.9px;color:#333;font-weight:700;">Data Value 1</div>
<div class="t" style="left:799.70px;top:369.07px;font-size:10.9px;color:#333;font-weight:700;">Data Value 2</div>
<div class="t" style="left:873.30px;top:369.07px;font-size:10.9px;color:#333;font-weight:700;">Remarks</div>
<div class="t" style="left:926.30px;top:369.07px;font-size:10.9px;color:#333;font-weight:700;">Engineer</div>
<div class="t" style="left:979.30px;top:369.07px;font-size:10.9px;color:#333;font-weight:700;">Mechanical</div>
<div class="t" style="left:-5.50px;width:600px;text-align:right;top:384.10px;font-size:8.3px;color:#333;font-weight:400;">1</div>
<div class="t" style="left:597.50px;top:384.10px;font-size:8.3px;color:#333;font-weight:400;letter-spacing:-0.12px;">Torque of L1 &amp; R1</div>
<div class="t" style="left:-5.50px;width:600px;text-align:right;top:396.70px;font-size:8.3px;color:#333;font-weight:400;">2</div>
<div class="t" style="left:597.50px;top:396.70px;font-size:8.3px;color:#333;font-weight:400;letter-spacing:-0.12px;">Pins 5 &amp; 6 On</div>
<div class="t" style="left:460.80px;width:600px;text-align:center;top:397.23px;font-size:7.2px;color:#2a2a2a;font-weight:400;">FALSE</div>
<div class="t" style="left:534.80px;width:600px;text-align:center;top:397.23px;font-size:7.2px;color:#2a2a2a;font-weight:400;">FALSE</div>
<div class="t" style="left:-5.50px;width:600px;text-align:right;top:409.30px;font-size:8.3px;color:#333;font-weight:400;">3</div>
<div class="t" style="left:597.50px;top:409.30px;font-size:8.3px;color:#333;font-weight:400;letter-spacing:-0.12px;">Pins 2 &amp; 4 Off</div>
<div class="t" style="left:460.80px;width:600px;text-align:center;top:409.83px;font-size:7.2px;color:#2a2a2a;font-weight:400;">FALSE</div>
<div class="t" style="left:534.80px;width:600px;text-align:center;top:409.83px;font-size:7.2px;color:#2a2a2a;font-weight:400;">FALSE</div>
<div class="t" style="left:-5.50px;width:600px;text-align:right;top:421.90px;font-size:8.3px;color:#333;font-weight:400;">4</div>
<div class="t" style="left:597.50px;top:421.90px;font-size:8.3px;color:#333;font-weight:400;letter-spacing:-0.12px;">Torque of L3 &amp; R3</div>
<div class="t" style="left:-5.50px;width:600px;text-align:right;top:434.50px;font-size:8.3px;color:#333;font-weight:400;">5</div>
<div class="t" style="left:597.50px;top:434.50px;font-size:8.3px;color:#333;font-weight:400;letter-spacing:-0.12px;">Torque Sufficient</div>
<div class="t" style="left:460.80px;width:600px;text-align:center;top:435.03px;font-size:7.2px;color:#2a2a2a;font-weight:400;">FALSE</div>
<div class="t" style="left:534.80px;width:600px;text-align:center;top:435.03px;font-size:7.2px;color:#2a2a2a;font-weight:400;">FALSE</div>
<svg class="a" style="left:700px;top:370px;" width="400" height="100" viewBox="0 0 400 100"><path d="M24.00 11.30 L172.00 11.30 M24.00 23.90 L172.00 23.90 M24.00 11.30 L24.00 23.90 M97.60 11.30 L97.60 23.90 M24.00 49.10 L172.00 49.10 M24.00 61.70 L172.00 61.70 M24.00 49.10 L24.00 61.70 M97.60 49.10 L97.60 61.70 M172.00 11.30 L345.80 11.30 M172.00 23.90 L345.80 23.90 M172.00 36.50 L345.80 36.50 M172.00 49.10 L345.80 49.10 M172.00 61.70 L345.80 61.70 M172.00 74.30 L345.80 74.30 M172.00 11.30 L172.00 74.30 M345.80 11.30 L345.80 74.30 " fill="none" stroke="#f6ea00" stroke-width="1.5" stroke-dasharray="5.5 3.5"/></svg>
<div class="a" style="left:924px;top:382px;width:54.5px;height:209.5px;background:rgba(110,165,220,0.38)"></div>
<div class="a" style="left:924px;top:365.2px;width:1.4px;height:226.3px;background:#94c0e8"></div>
<div class="a" style="left:977.2px;top:365.2px;width:1.4px;height:226.3px;background:#94c0e8"></div>
<div class="a" style="left:1147px;top:351.7px;width:11px;height:240.5px;background:#ececec"></div>
<div class="a" style="left:1147px;top:362.5px;width:10.5px;height:206px;background:#c2c2c2"></div>
<svg class="a" style="left:1149.5px;top:355.2px;" width="6" height="4" viewBox="0 0 6 4"><path d="M0.5 3.3 L3 0.8 L5.5 3.3" fill="none" stroke="#444" stroke-width=".9"/></svg>
<svg class="a" style="left:1149.5px;top:584.2px;" width="6" height="4" viewBox="0 0 6 4"><path d="M0.5 0.7 L3 3.2 L5.5 0.7" fill="none" stroke="#444" stroke-width=".9"/></svg>
<div class="a" style="left:550.5px;top:591.2px;width:597px;height:11.5px;background:#fff;border:1px solid #c8c8c8;border-right:none"></div>
<div class="a" style="left:551px;top:591.5px;width:51px;height:11px;border-right:1px solid #dcdcdc"></div>
<svg class="a" style="left:559px;top:594.7px;" width="6" height="5" viewBox="0 0 6 5"><path d="M0.5 0.5 V4.5 M4 0.5 L1.5 2.5 L4 4.5 M6 0.5 L3.5 2.5 L6 4.5" stroke="#ccc" stroke-width=".7" fill="none"/></svg>
<svg class="a" style="left:571px;top:594.7px;" width="6" height="5" viewBox="0 0 6 5"><path d="M3.5 0.5 L1.5 2.5 L3.5 4.5" stroke="#ccc" stroke-width=".7" fill="none"/></svg>
<svg class="a" style="left:579.5px;top:594.7px;" width="6" height="5" viewBox="0 0 6 5"><path d="M1.5 0.5 L3.5 2.5 L1.5 4.5" stroke="#ccc" stroke-width=".7" fill="none"/></svg>
<svg class="a" style="left:589px;top:594.7px;" width="6" height="5" viewBox="0 0 6 5"><path d="M5.5 0.5 V4.5 M2 0.5 L4.5 2.5 L2 4.5 M0 0.5 L2.5 2.5 L0 4.5" stroke="#ccc" stroke-width=".7" fill="none"/></svg>
<div class="t" style="left:321.00px;width:600px;text-align:center;top:593.78px;font-size:7.1px;color:#333;font-weight:400;">Sheet1</div>
<div class="a" style="left:640px;top:592px;width:1px;height:10px;background:#e0e0e0"></div>
<div class="a" style="left:659.6px;top:592px;width:1px;height:10px;background:#e0e0e0"></div>
<div class="t" style="left:349.80px;width:600px;text-align:center;top:592.86px;font-size:9px;color:#444;font-weight:700;">+</div>
<div class="a" style="left:967.4px;top:593px;width:1px;height:8px;background:#999"></div>
<div class="a" style="left:968px;top:592px;width:179px;height:10.5px;background:#ececec"></div>
<div class="a" style="left:981px;top:592.5px;width:141px;height:9.5px;background:#c2c2c2"></div>
<svg class="a" style="left:973.5px;top:594.5px;" width="4" height="6" viewBox="0 0 4 6"><path d="M3.3 0.5 L0.8 3 L3.3 5.5" fill="none" stroke="#444" stroke-width=".9"/></svg>
<svg class="a" style="left:1139.5px;top:594.5px;" width="4" height="6" viewBox="0 0 4 6"><path d="M0.7 0.5 L3.2 3 L0.7 5.5" fill="none" stroke="#444" stroke-width=".9"/></svg>
<div class="a" style="left:1147px;top:592px;width:11px;height:10.5px;background:#ececec"></div>
</body></html>
